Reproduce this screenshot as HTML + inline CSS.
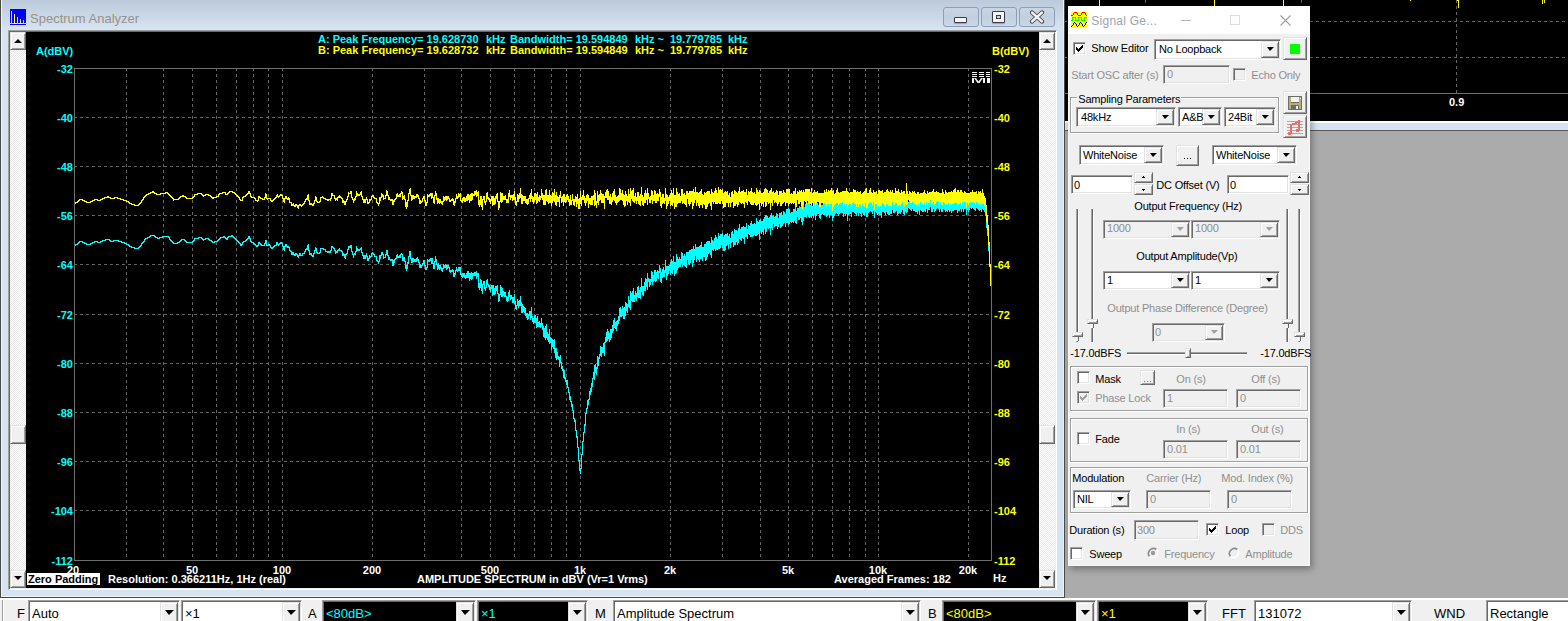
<!DOCTYPE html><html><head><meta charset="utf-8"><style>
*{margin:0;padding:0;box-sizing:border-box}
html,body{width:1568px;height:621px;overflow:hidden;background:#ababab;font-family:"Liberation Sans",sans-serif}
.a{position:absolute}
.t{position:absolute;white-space:pre;line-height:1}
.cb{position:absolute;font-weight:bold;font-size:11px;white-space:pre;line-height:1}
.win7btn{position:absolute;border:1px solid #8796b3;border-radius:3px;background:linear-gradient(#c7d4e3,#c0cedf 50%,#cfdced)}
.sunk{position:absolute;border-top:1px solid #a0a0a0;border-left:1px solid #a0a0a0;border-right:1px solid #fff;border-bottom:1px solid #fff}
.sunk2{position:absolute;border-top:1px solid #696969;border-left:1px solid #696969;border-right:1px solid #e3e3e3;border-bottom:1px solid #e3e3e3}
.rais{position:absolute;background:#f0f0f0;border-top:1px solid #fff;border-left:1px solid #fff;border-right:1px solid #696969;border-bottom:1px solid #696969}
.rais2{position:absolute;border-top:1px solid #e3e3e3;border-left:1px solid #e3e3e3;border-right:1px solid #a0a0a0;border-bottom:1px solid #a0a0a0}
.arr{position:absolute;width:0;height:0;border-left:4px solid transparent;border-right:4px solid transparent;border-top:4px solid #000}
.ui{font-size:11px;color:#000}
.dis{color:#a0a0a0}
</style></head><body><div class="a" style="left:1064px;top:0px;width:504px;height:121px;background:#000"></div><div class="a" style="left:1064px;top:121px;width:504px;height:2px;background:#fff"></div><div class="a" style="left:1064px;top:123px;width:504px;height:7px;background:#d6e3f1"></div><div class="a" style="left:1064px;top:130px;width:504px;height:1px;background:#595959"></div><svg class="a" style="left:0;top:0" width="1568" height="130" viewBox="0 0 1568 130" shape-rendering="crispEdges"><path d="M1145.5 0V93M1301.5 0V93M1456.5 0V93M1064 21.5H1568M1064 57.5H1568" stroke="#646464" stroke-dasharray="3 3" fill="none"/><path d="M1064 93.5H1568" stroke="#6e6e6e" fill="none"/><path d="M1099 0h1v6h-1zM1214 0h1v6h-1zM1283 0h1v6h-1zM1410 0h1v1h-1zM1457 0h2v1h-2zM1458 0h1v8h-1zM1542 0h1v4h-1zM1544 0h1v3h-1z" fill="#ffff00"/></svg><div class="t" style="left:1449px;top:97px;font-size:11px;font-weight:bold;color:#fff">0.9</div><div class="a" style="left:0;top:-8px;width:1065px;height:606px;background:#d6e3f1;border:1px solid #4a4a4a;border-top:none"></div><div class="a" style="left:1px;top:-8px;width:1063px;height:605px;border-left:1px solid #eef4fa;border-right:1px solid #eef4fa;border-bottom:1px solid #eef4fa"></div><div class="a" style="left:2px;top:0;width:1061px;height:29px;background:linear-gradient(#bccadb,#c9d6e5 50%,#d6e3f1)"></div><svg class="a" style="left:10px;top:9px" width="16" height="16" viewBox="0 0 16 16"><rect width="16" height="16" fill="#0000ff"/><path d="M1.5 14V2 M4.5 14V4.5 M7.5 14V7.5 M10.5 14V9.5 M13.5 14V11 M0 14.5H16" stroke="#ffff00" stroke-width="1" fill="none" shape-rendering="crispEdges"/></svg><div class="t" style="left:30px;top:12px;font-size:13px;color:#97928c">Spectrum Analyzer</div><div class="a" style="left:943px;top:7px;width:36px;height:20px;border:1px solid #8e9db8;border-radius:3px;background:linear-gradient(#c9d5e3,#c2cfdf 50%,#cbd8e8)"></div><div class="a" style="left:981px;top:7px;width:36px;height:20px;border:1px solid #8e9db8;border-radius:3px;background:linear-gradient(#c9d5e3,#c2cfdf 50%,#cbd8e8)"></div><div class="a" style="left:1019px;top:7px;width:36px;height:20px;border:1px solid #8e9db8;border-radius:3px;background:linear-gradient(#c9d5e3,#c2cfdf 50%,#cbd8e8)"></div><div class="a" style="left:954px;top:17px;width:13px;height:6px;background:#f4f4f4;border:1px solid #3c3c46;border-radius:1px;box-shadow:0 1px 1px rgba(0,0,0,.25)"></div><div class="a" style="left:992px;top:11px;width:13px;height:12px;background:#f4f4f4;border:1px solid #3c3c46;border-radius:1px;box-shadow:0 1px 1px rgba(0,0,0,.25)"></div><div class="a" style="left:996px;top:15px;width:5px;height:4px;background:#c7d4e3;border:1px solid #3c3c46"></div><svg class="a" style="left:1029px;top:10px" width="16" height="14" viewBox="0 0 16 14"><path d="M3 2.5L13 11.5M13 2.5L3 11.5" stroke="#3c3c46" stroke-width="4.2" stroke-linecap="round"/><path d="M3 2.5L13 11.5M13 2.5L3 11.5" stroke="#f2f2f2" stroke-width="2.4" stroke-linecap="round"/></svg><div class="a" style="left:8px;top:30px;width:1049px;height:560px;border-top:1px solid #a0a0a0;border-left:1px solid #a0a0a0;border-right:1px solid #fff;border-bottom:1px solid #fff;box-shadow:inset 1px 1px 0 #696969,inset -1px -1px 0 #eef0f2"></div><div class="a" style="left:10px;top:32px;width:1045px;height:556px;background:#000"></div><div class="a" style="left:10px;top:32px;width:16px;height:556px;background-color:#f7f7f7;background-image:repeating-conic-gradient(#fff 0 25%,#e8e8e8 0 50%);background-size:2px 2px"></div><div class="a" style="left:10px;top:32px;width:16px;height:18px;background:#f0f0f0;border-top:1px solid #e3e3e3;border-left:1px solid #e3e3e3;border-right:1px solid #696969;border-bottom:1px solid #696969;box-shadow:inset 1px 1px 0 #fff,inset -1px -1px 0 #a0a0a0"></div><div class="a" style="left:14px;top:39px;width:0;height:0;border-left:4px solid transparent;border-right:4px solid transparent;border-bottom:4px solid #000"></div><div class="a" style="left:10px;top:570px;width:16px;height:18px;background:#f0f0f0;border-top:1px solid #e3e3e3;border-left:1px solid #e3e3e3;border-right:1px solid #696969;border-bottom:1px solid #696969;box-shadow:inset 1px 1px 0 #fff,inset -1px -1px 0 #a0a0a0"></div><div class="a" style="left:14px;top:576px;width:0;height:0;border-left:4px solid transparent;border-right:4px solid transparent;border-top:4px solid #000"></div><div class="a" style="left:10px;top:425px;width:16px;height:19px;background:#f0f0f0;border-top:1px solid #e3e3e3;border-left:1px solid #e3e3e3;border-right:1px solid #696969;border-bottom:1px solid #696969;box-shadow:inset 1px 1px 0 #fff,inset -1px -1px 0 #a0a0a0"></div><div class="a" style="left:1039px;top:32px;width:16px;height:556px;background-color:#f7f7f7;background-image:repeating-conic-gradient(#fff 0 25%,#e8e8e8 0 50%);background-size:2px 2px"></div><div class="a" style="left:1039px;top:32px;width:16px;height:18px;background:#f0f0f0;border-top:1px solid #e3e3e3;border-left:1px solid #e3e3e3;border-right:1px solid #696969;border-bottom:1px solid #696969;box-shadow:inset 1px 1px 0 #fff,inset -1px -1px 0 #a0a0a0"></div><div class="a" style="left:1043px;top:39px;width:0;height:0;border-left:4px solid transparent;border-right:4px solid transparent;border-bottom:4px solid #000"></div><div class="a" style="left:1039px;top:570px;width:16px;height:18px;background:#f0f0f0;border-top:1px solid #e3e3e3;border-left:1px solid #e3e3e3;border-right:1px solid #696969;border-bottom:1px solid #696969;box-shadow:inset 1px 1px 0 #fff,inset -1px -1px 0 #a0a0a0"></div><div class="a" style="left:1043px;top:576px;width:0;height:0;border-left:4px solid transparent;border-right:4px solid transparent;border-top:4px solid #000"></div><div class="a" style="left:1039px;top:425px;width:16px;height:19px;background:#f0f0f0;border-top:1px solid #e3e3e3;border-left:1px solid #e3e3e3;border-right:1px solid #696969;border-bottom:1px solid #696969;box-shadow:inset 1px 1px 0 #fff,inset -1px -1px 0 #a0a0a0"></div><svg class="a" style="left:0;top:0" width="1568" height="621" viewBox="0 0 1568 621" shape-rendering="crispEdges"><path d="M126.5 68V560M163.5 68V560M192.5 68V560M216.5 68V560M236.5 68V560M253.5 68V560M268.5 68V560M282.5 68V560M372.5 68V560M424.5 68V560M461.5 68V560M490.5 68V560M514.5 68V560M534.5 68V560M551.5 68V560M566.5 68V560M580.5 68V560M670.5 68V560M722.5 68V560M760.5 68V560M788.5 68V560M812.5 68V560M832.5 68V560M849.5 68V560M865.5 68V560M878.5 68V560M968.5 68V560M74 117.5H991M74 166.5H991M74 215.5H991M74 264.5H991M74 314.5H991M74 363.5H991M74 412.5H991M74 461.5H991M74 510.5H991" stroke="#646464" stroke-width="1" stroke-dasharray="3 3" fill="none"/><rect x="74.5" y="68.5" width="917" height="492" stroke="#6e6e6e" fill="none"/><path d="M75 244h1v2h-1zM76 244h1v1h-1zM77 243h1v2h-1zM78 242h1v2h-1zM79 241h1v2h-1zM80 241h1v1h-1zM81 241h1v1h-1zM82 241h1v2h-1zM83 242h1v1h-1zM84 242h1v2h-1zM85 243h1v1h-1zM86 243h1v2h-1zM87 244h1v1h-1zM88 244h1v1h-1zM89 244h1v1h-1zM90 243h1v2h-1zM91 243h1v1h-1zM92 242h1v2h-1zM93 242h1v1h-1zM94 241h1v2h-1zM95 241h1v1h-1zM96 241h1v1h-1zM97 241h1v2h-1zM98 242h1v1h-1zM99 242h1v1h-1zM100 241h1v2h-1zM101 241h1v1h-1zM102 240h1v2h-1zM103 240h1v1h-1zM104 240h1v1h-1zM105 239h1v2h-1zM106 239h1v1h-1zM107 239h1v1h-1zM108 239h1v1h-1zM109 239h1v2h-1zM110 240h1v2h-1zM111 241h1v1h-1zM112 241h1v1h-1zM113 240h1v2h-1zM114 240h1v1h-1zM115 240h1v1h-1zM116 240h1v1h-1zM117 240h1v1h-1zM118 240h1v2h-1zM119 241h1v1h-1zM120 241h1v1h-1zM121 241h1v2h-1zM122 242h1v1h-1zM123 242h1v1h-1zM124 242h1v2h-1zM125 243h1v1h-1zM126 243h1v2h-1zM127 244h1v1h-1zM128 244h1v2h-1zM129 245h1v2h-1zM130 246h1v1h-1zM131 246h1v2h-1zM132 247h1v1h-1zM133 247h1v1h-1zM134 247h1v2h-1zM135 248h1v1h-1zM136 248h1v1h-1zM137 248h1v1h-1zM138 247h1v2h-1zM139 246h1v2h-1zM140 245h1v2h-1zM141 243h1v3h-1zM142 242h1v2h-1zM143 241h1v2h-1zM144 239h1v3h-1zM145 238h1v2h-1zM146 238h1v1h-1zM147 237h1v2h-1zM148 237h1v1h-1zM149 236h1v2h-1zM150 235h1v2h-1zM151 235h1v1h-1zM152 235h1v1h-1zM153 235h1v1h-1zM154 235h1v2h-1zM155 236h1v2h-1zM156 237h1v1h-1zM157 237h1v2h-1zM158 238h1v1h-1zM159 237h1v2h-1zM160 237h1v1h-1zM161 237h1v1h-1zM162 236h1v2h-1zM163 236h1v1h-1zM164 236h1v1h-1zM165 236h1v1h-1zM166 236h1v1h-1zM167 236h1v1h-1zM168 236h1v2h-1zM169 237h1v3h-1zM170 239h1v2h-1zM171 240h1v2h-1zM172 241h1v2h-1zM173 242h1v2h-1zM174 243h1v1h-1zM175 243h1v1h-1zM176 243h1v1h-1zM177 242h1v2h-1zM178 242h1v1h-1zM179 241h1v2h-1zM180 240h1v2h-1zM181 239h1v2h-1zM182 239h1v1h-1zM183 239h1v1h-1zM184 239h1v2h-1zM185 240h1v2h-1zM186 241h1v2h-1zM187 242h1v1h-1zM188 242h1v1h-1zM189 242h1v1h-1zM190 242h1v1h-1zM191 242h1v1h-1zM192 241h1v2h-1zM193 240h1v2h-1zM194 238h1v3h-1zM195 238h1v1h-1zM196 238h1v1h-1zM197 238h1v1h-1zM198 237h1v2h-1zM199 237h1v1h-1zM200 237h1v1h-1zM201 237h1v2h-1zM202 238h1v2h-1zM203 239h1v2h-1zM204 239h1v1h-1zM205 238h1v2h-1zM206 238h1v1h-1zM207 238h1v1h-1zM208 238h1v2h-1zM209 239h1v2h-1zM210 240h1v1h-1zM211 240h1v2h-1zM212 241h1v2h-1zM213 242h1v1h-1zM214 241h1v2h-1zM215 241h1v1h-1zM216 241h1v1h-1zM217 240h1v2h-1zM218 239h1v2h-1zM219 238h1v2h-1zM220 237h1v2h-1zM221 237h1v1h-1zM222 237h1v1h-1zM223 236h1v2h-1zM224 236h1v2h-1zM225 237h1v2h-1zM226 238h1v2h-1zM227 237h1v3h-1zM228 236h1v2h-1zM229 236h1v1h-1zM230 236h1v1h-1zM231 235h1v2h-1zM232 235h1v2h-1zM233 236h1v2h-1zM234 237h1v2h-1zM235 238h1v2h-1zM236 239h1v2h-1zM237 240h1v2h-1zM238 241h1v2h-1zM239 242h1v2h-1zM240 243h1v3h-1zM241 244h1v2h-1zM242 242h1v3h-1zM243 241h1v2h-1zM244 241h1v1h-1zM245 240h1v2h-1zM246 239h1v2h-1zM247 238h1v2h-1zM248 236h1v3h-1zM249 236h1v3h-1zM250 238h1v4h-1zM251 241h1v2h-1zM252 242h1v1h-1zM253 242h1v2h-1zM254 243h1v2h-1zM255 244h1v2h-1zM256 245h1v2h-1zM257 245h1v2h-1zM258 242h1v4h-1zM259 242h1v2h-1zM260 243h1v2h-1zM261 244h1v2h-1zM262 245h1v1h-1zM263 245h1v1h-1zM264 243h1v3h-1zM265 240h1v4h-1zM266 240h1v6h-1zM267 245h1v1h-1zM268 244h1v2h-1zM269 244h1v2h-1zM270 245h1v3h-1zM271 247h1v2h-1zM272 247h1v2h-1zM273 246h1v2h-1zM274 245h1v2h-1zM275 245h1v1h-1zM276 242h1v4h-1zM277 242h1v3h-1zM278 244h1v2h-1zM279 243h1v2h-1zM280 242h1v2h-1zM281 242h1v2h-1zM282 243h1v4h-1zM283 246h1v4h-1zM284 246h1v5h-1zM285 244h1v3h-1zM286 244h1v3h-1zM287 246h1v2h-1zM288 246h1v2h-1zM289 247h1v4h-1zM290 250h1v2h-1zM291 251h1v4h-1zM292 252h1v3h-1zM293 252h1v3h-1zM294 254h1v2h-1zM295 253h1v3h-1zM296 253h1v2h-1zM297 254h1v3h-1zM298 255h1v3h-1zM299 253h1v3h-1zM300 253h1v3h-1zM301 255h1v1h-1zM302 253h1v3h-1zM303 253h1v1h-1zM304 251h1v3h-1zM305 249h1v3h-1zM306 248h1v2h-1zM307 245h1v5h-1zM308 244h1v7h-1zM309 250h1v5h-1zM310 253h1v2h-1zM311 253h1v3h-1zM312 255h1v2h-1zM313 253h1v4h-1zM314 250h1v4h-1zM315 247h1v4h-1zM316 248h1v5h-1zM317 252h1v2h-1zM318 253h1v1h-1zM319 252h1v2h-1zM320 248h1v5h-1zM321 248h1v1h-1zM322 248h1v1h-1zM323 248h1v2h-1zM324 249h1v1h-1zM325 249h1v3h-1zM326 251h1v1h-1zM327 251h1v2h-1zM328 251h1v2h-1zM329 251h1v2h-1zM330 250h1v3h-1zM331 246h1v5h-1zM332 246h1v2h-1zM333 247h1v2h-1zM334 248h1v3h-1zM335 250h1v4h-1zM336 251h1v2h-1zM337 250h1v3h-1zM338 249h1v2h-1zM339 248h1v3h-1zM340 250h1v1h-1zM341 250h1v2h-1zM342 251h1v5h-1zM343 253h1v3h-1zM344 254h1v4h-1zM345 254h1v5h-1zM346 253h1v2h-1zM347 249h1v5h-1zM348 246h1v4h-1zM349 246h1v2h-1zM350 245h1v3h-1zM351 245h1v7h-1zM352 251h1v4h-1zM353 254h1v4h-1zM354 253h1v2h-1zM355 251h1v4h-1zM356 246h1v6h-1zM357 248h1v3h-1zM358 249h1v2h-1zM359 249h1v2h-1zM360 248h1v2h-1zM361 247h1v6h-1zM362 252h1v4h-1zM363 255h1v4h-1zM364 255h1v4h-1zM365 255h1v4h-1zM366 253h1v4h-1zM367 256h1v5h-1zM368 258h1v3h-1zM369 255h1v4h-1zM370 256h1v2h-1zM371 253h1v4h-1zM372 252h1v2h-1zM373 253h1v2h-1zM374 254h1v3h-1zM375 256h1v1h-1zM376 256h1v5h-1zM377 260h1v2h-1zM378 261h1v3h-1zM379 255h1v7h-1zM380 255h1v4h-1zM381 252h1v4h-1zM382 252h1v3h-1zM383 254h1v5h-1zM384 257h1v1h-1zM385 254h1v4h-1zM386 250h1v5h-1zM387 250h1v6h-1zM388 255h1v5h-1zM389 257h1v3h-1zM390 259h1v2h-1zM391 259h1v2h-1zM392 259h1v7h-1zM393 260h1v6h-1zM394 259h1v4h-1zM395 258h1v2h-1zM396 255h1v4h-1zM397 254h1v4h-1zM398 256h1v2h-1zM399 255h1v3h-1zM400 254h1v4h-1zM401 253h1v2h-1zM402 254h1v7h-1zM403 257h1v4h-1zM404 257h1v5h-1zM405 261h1v8h-1zM406 265h1v6h-1zM407 262h1v7h-1zM408 256h1v8h-1zM409 251h1v6h-1zM410 251h1v8h-1zM411 258h1v5h-1zM412 258h1v5h-1zM413 258h1v4h-1zM414 259h1v3h-1zM415 259h1v3h-1zM416 258h1v4h-1zM417 257h1v4h-1zM418 259h1v4h-1zM419 262h1v6h-1zM420 264h1v4h-1zM421 265h1v3h-1zM422 263h1v3h-1zM423 260h1v4h-1zM424 260h1v6h-1zM425 265h1v5h-1zM426 267h1v3h-1zM427 259h1v9h-1zM428 260h1v2h-1zM429 259h1v3h-1zM430 258h1v3h-1zM431 258h1v6h-1zM432 258h1v6h-1zM433 263h1v6h-1zM434 261h1v8h-1zM435 256h1v6h-1zM436 259h1v6h-1zM437 264h1v6h-1zM438 263h1v6h-1zM439 265h1v5h-1zM440 265h1v4h-1zM441 267h1v4h-1zM442 268h1v4h-1zM443 264h1v5h-1zM444 265h1v3h-1zM445 264h1v4h-1zM446 265h1v5h-1zM447 265h1v4h-1zM448 265h1v3h-1zM449 267h1v5h-1zM450 270h1v3h-1zM451 270h1v2h-1zM452 269h1v3h-1zM453 270h1v7h-1zM454 273h1v4h-1zM455 270h1v5h-1zM456 267h1v4h-1zM457 269h1v3h-1zM458 267h1v4h-1zM459 267h1v4h-1zM460 267h1v8h-1zM461 274h1v3h-1zM462 273h1v5h-1zM463 273h1v4h-1zM464 273h1v5h-1zM465 275h1v4h-1zM466 273h1v5h-1zM467 271h1v7h-1zM468 271h1v7h-1zM469 273h1v8h-1zM470 273h1v6h-1zM471 272h1v8h-1zM472 273h1v6h-1zM473 273h1v3h-1zM474 272h1v4h-1zM475 272h1v4h-1zM476 271h1v8h-1zM477 273h1v4h-1zM478 273h1v15h-1zM479 283h1v7h-1zM480 279h1v9h-1zM481 280h1v11h-1zM482 284h1v10h-1zM483 281h1v4h-1zM484 281h1v8h-1zM485 287h1v4h-1zM486 280h1v8h-1zM487 279h1v6h-1zM488 284h1v3h-1zM489 285h1v5h-1zM490 287h1v5h-1zM491 285h1v4h-1zM492 285h1v11h-1zM493 285h1v10h-1zM494 288h1v7h-1zM495 286h1v8h-1zM496 286h1v5h-1zM497 285h1v9h-1zM498 293h1v9h-1zM499 294h1v7h-1zM500 285h1v10h-1zM501 287h1v10h-1zM502 288h1v9h-1zM503 291h1v5h-1zM504 292h1v5h-1zM505 292h1v5h-1zM506 296h1v5h-1zM507 297h1v5h-1zM508 292h1v9h-1zM509 290h1v7h-1zM510 295h1v5h-1zM511 295h1v4h-1zM512 297h1v6h-1zM513 297h1v6h-1zM514 294h1v10h-1zM515 301h1v8h-1zM516 305h1v5h-1zM517 299h1v7h-1zM518 301h1v7h-1zM519 300h1v6h-1zM520 296h1v10h-1zM521 302h1v11h-1zM522 304h1v9h-1zM523 306h1v6h-1zM524 307h1v6h-1zM525 308h1v8h-1zM526 313h1v5h-1zM527 313h1v7h-1zM528 314h1v5h-1zM529 311h1v5h-1zM530 311h1v9h-1zM531 307h1v11h-1zM532 316h1v6h-1zM533 318h1v6h-1zM534 315h1v8h-1zM535 315h1v8h-1zM536 318h1v10h-1zM537 316h1v11h-1zM538 322h1v5h-1zM539 321h1v6h-1zM540 323h1v5h-1zM541 318h1v9h-1zM542 323h1v7h-1zM543 326h1v11h-1zM544 328h1v10h-1zM545 326h1v14h-1zM546 324h1v14h-1zM547 332h1v8h-1zM548 334h1v8h-1zM549 329h1v15h-1zM550 337h1v6h-1zM551 338h1v12h-1zM552 339h1v8h-1zM553 340h1v9h-1zM554 339h1v14h-1zM555 348h1v10h-1zM556 348h1v12h-1zM557 352h1v7h-1zM558 356h1v4h-1zM559 357h1v10h-1zM560 355h1v8h-1zM561 362h1v7h-1zM562 366h1v5h-1zM563 369h1v9h-1zM564 370h1v9h-1zM565 377h1v5h-1zM566 380h1v5h-1zM567 380h1v8h-1zM568 387h1v6h-1zM569 392h1v8h-1zM570 396h1v6h-1zM571 401h1v6h-1zM572 404h1v7h-1zM573 410h1v9h-1zM574 418h1v4h-1zM575 420h1v11h-1zM576 430h1v8h-1zM577 436h1v12h-1zM578 447h1v14h-1zM579 460h1v11h-1zM580 468h1v6h-1zM581 454h1v15h-1zM582 441h1v14h-1zM583 432h1v10h-1zM584 424h1v9h-1zM585 413h1v13h-1zM586 408h1v6h-1zM587 400h1v9h-1zM588 399h1v6h-1zM589 391h1v9h-1zM590 388h1v7h-1zM591 383h1v9h-1zM592 378h1v9h-1zM593 372h1v7h-1zM594 365h1v15h-1zM595 364h1v9h-1zM596 367h1v8h-1zM597 356h1v13h-1zM598 357h1v9h-1zM599 354h1v5h-1zM600 346h1v10h-1zM601 347h1v10h-1zM602 347h1v6h-1zM603 343h1v10h-1zM604 342h1v14h-1zM605 337h1v6h-1zM606 332h1v10h-1zM607 329h1v12h-1zM608 331h1v8h-1zM609 333h1v9h-1zM610 329h1v11h-1zM611 329h1v9h-1zM612 325h1v8h-1zM613 320h1v11h-1zM614 318h1v10h-1zM615 322h1v7h-1zM616 321h1v10h-1zM617 320h1v6h-1zM618 316h1v8h-1zM619 308h1v13h-1zM620 307h1v10h-1zM621 309h1v8h-1zM622 306h1v10h-1zM623 308h1v11h-1zM624 307h1v12h-1zM625 302h1v14h-1zM626 303h1v8h-1zM627 304h1v9h-1zM628 296h1v11h-1zM629 300h1v8h-1zM630 291h1v19h-1zM631 293h1v8h-1zM632 291h1v11h-1zM633 288h1v14h-1zM634 295h1v7h-1zM635 291h1v8h-1zM636 293h1v8h-1zM637 287h1v10h-1zM638 286h1v12h-1zM639 290h1v8h-1zM640 287h1v12h-1zM641 278h1v14h-1zM642 286h1v9h-1zM643 286h1v10h-1zM644 282h1v9h-1zM645 278h1v13h-1zM646 279h1v8h-1zM647 273h1v17h-1zM648 278h1v4h-1zM649 279h1v8h-1zM650 279h1v6h-1zM651 271h1v11h-1zM652 272h1v13h-1zM653 275h1v7h-1zM654 270h1v11h-1zM655 270h1v12h-1zM656 272h1v9h-1zM657 270h1v8h-1zM658 271h1v8h-1zM659 265h1v8h-1zM660 268h1v14h-1zM661 272h1v11h-1zM662 269h1v9h-1zM663 267h1v10h-1zM664 270h1v7h-1zM665 260h1v13h-1zM666 266h1v14h-1zM667 266h1v10h-1zM668 266h1v8h-1zM669 265h1v6h-1zM670 262h1v13h-1zM671 259h1v14h-1zM672 261h1v13h-1zM673 256h1v14h-1zM674 262h1v14h-1zM675 262h1v12h-1zM676 254h1v19h-1zM677 257h1v13h-1zM678 259h1v9h-1zM679 257h1v10h-1zM680 259h1v8h-1zM681 252h1v12h-1zM682 253h1v14h-1zM683 256h1v9h-1zM684 254h1v12h-1zM685 256h1v11h-1zM686 252h1v16h-1zM687 252h1v8h-1zM688 252h1v12h-1zM689 250h1v15h-1zM690 250h1v13h-1zM691 249h1v11h-1zM692 249h1v18h-1zM693 246h1v17h-1zM694 249h1v11h-1zM695 244h1v12h-1zM696 247h1v15h-1zM697 247h1v12h-1zM698 247h1v13h-1zM699 246h1v16h-1zM700 245h1v14h-1zM701 242h1v17h-1zM702 247h1v14h-1zM703 247h1v10h-1zM704 244h1v13h-1zM705 244h1v17h-1zM706 242h1v18h-1zM707 241h1v16h-1zM708 241h1v13h-1zM709 241h1v12h-1zM710 243h1v12h-1zM711 237h1v21h-1zM712 240h1v10h-1zM713 241h1v10h-1zM714 238h1v11h-1zM715 235h1v16h-1zM716 237h1v13h-1zM717 239h1v11h-1zM718 233h1v16h-1zM719 236h1v13h-1zM720 234h1v14h-1zM721 234h1v11h-1zM722 233h1v15h-1zM723 237h1v14h-1zM724 235h1v16h-1zM725 234h1v16h-1zM726 234h1v12h-1zM727 233h1v12h-1zM728 236h1v13h-1zM729 234h1v10h-1zM730 238h1v10h-1zM731 232h1v11h-1zM732 231h1v11h-1zM733 234h1v13h-1zM734 229h1v16h-1zM735 230h1v15h-1zM736 230h1v12h-1zM737 231h1v14h-1zM738 228h1v15h-1zM739 224h1v15h-1zM740 229h1v11h-1zM741 227h1v14h-1zM742 227h1v11h-1zM743 226h1v13h-1zM744 227h1v17h-1zM745 227h1v10h-1zM746 223h1v14h-1zM747 229h1v10h-1zM748 225h1v9h-1zM749 226h1v9h-1zM750 223h1v14h-1zM751 221h1v16h-1zM752 224h1v13h-1zM753 224h1v12h-1zM754 223h1v12h-1zM755 224h1v12h-1zM756 218h1v18h-1zM757 221h1v14h-1zM758 222h1v12h-1zM759 220h1v20h-1zM760 219h1v12h-1zM761 221h1v13h-1zM762 221h1v11h-1zM763 219h1v16h-1zM764 217h1v12h-1zM765 215h1v19h-1zM766 215h1v17h-1zM767 216h1v12h-1zM768 218h1v11h-1zM769 217h1v11h-1zM770 215h1v20h-1zM771 213h1v15h-1zM772 216h1v14h-1zM773 215h1v9h-1zM774 217h1v10h-1zM775 216h1v10h-1zM776 213h1v13h-1zM777 214h1v15h-1zM778 218h1v9h-1zM779 213h1v11h-1zM780 213h1v15h-1zM781 212h1v15h-1zM782 215h1v11h-1zM783 211h1v13h-1zM784 212h1v11h-1zM785 214h1v13h-1zM786 209h1v14h-1zM787 209h1v14h-1zM788 208h1v17h-1zM789 209h1v15h-1zM790 213h1v9h-1zM791 212h1v11h-1zM792 212h1v10h-1zM793 209h1v14h-1zM794 209h1v12h-1zM795 205h1v18h-1zM796 211h1v13h-1zM797 208h1v9h-1zM798 208h1v12h-1zM799 206h1v14h-1zM800 207h1v11h-1zM801 206h1v16h-1zM802 207h1v18h-1zM803 205h1v16h-1zM804 207h1v10h-1zM805 204h1v13h-1zM806 204h1v14h-1zM807 203h1v12h-1zM808 202h1v15h-1zM809 203h1v15h-1zM810 205h1v12h-1zM811 201h1v17h-1zM812 206h1v10h-1zM813 204h1v14h-1zM814 202h1v13h-1zM815 204h1v16h-1zM816 204h1v12h-1zM817 203h1v11h-1zM818 205h1v9h-1zM819 204h1v14h-1zM820 204h1v15h-1zM821 205h1v10h-1zM822 205h1v9h-1zM823 204h1v11h-1zM824 202h1v13h-1zM825 203h1v12h-1zM826 200h1v17h-1zM827 203h1v13h-1zM828 201h1v14h-1zM829 202h1v16h-1zM830 201h1v14h-1zM831 199h1v16h-1zM832 202h1v19h-1zM833 201h1v17h-1zM834 205h1v11h-1zM835 204h1v10h-1zM836 201h1v12h-1zM837 199h1v15h-1zM838 202h1v14h-1zM839 203h1v11h-1zM840 202h1v11h-1zM841 202h1v11h-1zM842 201h1v12h-1zM843 201h1v16h-1zM844 201h1v13h-1zM845 201h1v15h-1zM846 198h1v16h-1zM847 201h1v20h-1zM848 202h1v13h-1zM849 203h1v11h-1zM850 202h1v12h-1zM851 202h1v15h-1zM852 202h1v10h-1zM853 199h1v13h-1zM854 200h1v13h-1zM855 200h1v14h-1zM856 201h1v15h-1zM857 200h1v13h-1zM858 201h1v15h-1zM859 201h1v12h-1zM860 200h1v14h-1zM861 203h1v14h-1zM862 202h1v11h-1zM863 201h1v14h-1zM864 200h1v16h-1zM865 198h1v14h-1zM866 197h1v20h-1zM867 201h1v16h-1zM868 201h1v12h-1zM869 199h1v13h-1zM870 197h1v14h-1zM871 201h1v11h-1zM872 201h1v13h-1zM873 199h1v12h-1zM874 200h1v18h-1zM875 200h1v12h-1zM876 200h1v13h-1zM877 202h1v13h-1zM878 199h1v15h-1zM879 199h1v16h-1zM880 200h1v15h-1zM881 199h1v19h-1zM882 198h1v14h-1zM883 201h1v11h-1zM884 201h1v12h-1zM885 200h1v15h-1zM886 198h1v14h-1zM887 197h1v17h-1zM888 200h1v15h-1zM889 200h1v15h-1zM890 198h1v16h-1zM891 200h1v14h-1zM892 198h1v12h-1zM893 201h1v12h-1zM894 201h1v12h-1zM895 196h1v16h-1zM896 199h1v12h-1zM897 199h1v16h-1zM898 197h1v17h-1zM899 200h1v13h-1zM900 201h1v13h-1zM901 198h1v14h-1zM902 200h1v10h-1zM903 199h1v15h-1zM904 199h1v16h-1zM905 202h1v10h-1zM906 191h1v22h-1zM907 199h1v13h-1zM908 202h1v6h-1zM909 199h1v10h-1zM910 200h1v10h-1zM911 201h1v10h-1zM912 198h1v11h-1zM913 200h1v11h-1zM914 199h1v12h-1zM915 200h1v12h-1zM916 201h1v11h-1zM917 200h1v14h-1zM918 200h1v11h-1zM919 201h1v14h-1zM920 200h1v10h-1zM921 201h1v10h-1zM922 200h1v12h-1zM923 200h1v12h-1zM924 197h1v14h-1zM925 201h1v11h-1zM926 202h1v7h-1zM927 198h1v15h-1zM928 200h1v10h-1zM929 200h1v10h-1zM930 199h1v8h-1zM931 200h1v12h-1zM932 198h1v14h-1zM933 196h1v13h-1zM934 200h1v12h-1zM935 199h1v12h-1zM936 198h1v11h-1zM937 199h1v9h-1zM938 199h1v10h-1zM939 200h1v12h-1zM940 200h1v9h-1zM941 200h1v12h-1zM942 196h1v16h-1zM943 199h1v10h-1zM944 201h1v9h-1zM945 197h1v15h-1zM946 199h1v12h-1zM947 200h1v12h-1zM948 199h1v11h-1zM949 198h1v14h-1zM950 199h1v12h-1zM951 197h1v16h-1zM952 199h1v12h-1zM953 196h1v15h-1zM954 196h1v14h-1zM955 195h1v15h-1zM956 198h1v12h-1zM957 196h1v17h-1zM958 197h1v14h-1zM959 198h1v13h-1zM960 196h1v13h-1zM961 197h1v15h-1zM962 199h1v10h-1zM963 199h1v13h-1zM964 198h1v11h-1zM965 199h1v10h-1zM966 199h1v16h-1zM967 199h1v11h-1zM968 199h1v13h-1zM969 199h1v11h-1zM970 198h1v10h-1zM971 199h1v10h-1zM972 197h1v11h-1zM973 199h1v10h-1zM974 198h1v12h-1zM975 198h1v13h-1zM976 197h1v11h-1zM977 200h1v9h-1zM978 197h1v13h-1zM979 198h1v13h-1zM980 197h1v13h-1zM981 199h1v13h-1zM982 195h1v14h-1zM983 199h1v11h-1zM984 202h1v10h-1zM985 204h1v12h-1zM986 211h1v17h-1zM987 221h1v15h-1zM988 231h1v20h-1zM989 248h1v19h-1zM990 266h1v1h-1z" fill="#00ffff"/><path d="M75 202h1v2h-1zM76 202h1v1h-1zM77 201h1v2h-1zM78 200h1v2h-1zM79 199h1v2h-1zM80 199h1v1h-1zM81 199h1v1h-1zM82 199h1v2h-1zM83 200h1v1h-1zM84 200h1v2h-1zM85 201h1v1h-1zM86 201h1v2h-1zM87 202h1v1h-1zM88 202h1v1h-1zM89 202h1v1h-1zM90 201h1v2h-1zM91 201h1v1h-1zM92 200h1v2h-1zM93 200h1v1h-1zM94 199h1v2h-1zM95 199h1v1h-1zM96 199h1v1h-1zM97 199h1v2h-1zM98 200h1v1h-1zM99 200h1v1h-1zM100 199h1v2h-1zM101 199h1v1h-1zM102 198h1v2h-1zM103 198h1v1h-1zM104 197h1v2h-1zM105 197h1v1h-1zM106 197h1v1h-1zM107 196h1v2h-1zM108 196h1v2h-1zM109 197h1v1h-1zM110 197h1v2h-1zM111 198h1v1h-1zM112 198h1v1h-1zM113 198h1v1h-1zM114 197h1v2h-1zM115 197h1v1h-1zM116 197h1v1h-1zM117 197h1v2h-1zM118 198h1v1h-1zM119 198h1v1h-1zM120 198h1v2h-1zM121 199h1v1h-1zM122 199h1v1h-1zM123 199h1v2h-1zM124 200h1v1h-1zM125 200h1v1h-1zM126 200h1v2h-1zM127 201h1v1h-1zM128 201h1v2h-1zM129 202h1v2h-1zM130 203h1v1h-1zM131 203h1v2h-1zM132 204h1v1h-1zM133 204h1v1h-1zM134 204h1v2h-1zM135 205h1v1h-1zM136 205h1v1h-1zM137 205h1v1h-1zM138 204h1v2h-1zM139 203h1v2h-1zM140 202h1v2h-1zM141 200h1v3h-1zM142 199h1v2h-1zM143 197h1v3h-1zM144 196h1v2h-1zM145 195h1v2h-1zM146 194h1v2h-1zM147 194h1v1h-1zM148 193h1v2h-1zM149 193h1v1h-1zM150 192h1v2h-1zM151 192h1v1h-1zM152 191h1v2h-1zM153 191h1v2h-1zM154 192h1v2h-1zM155 193h1v1h-1zM156 193h1v2h-1zM157 194h1v1h-1zM158 194h1v1h-1zM159 194h1v1h-1zM160 193h1v2h-1zM161 193h1v1h-1zM162 193h1v1h-1zM163 193h1v1h-1zM164 193h1v1h-1zM165 192h1v2h-1zM166 192h1v1h-1zM167 192h1v2h-1zM168 193h1v2h-1zM169 194h1v2h-1zM170 195h1v2h-1zM171 196h1v2h-1zM172 197h1v2h-1zM173 198h1v3h-1zM174 199h1v1h-1zM175 199h1v1h-1zM176 199h1v1h-1zM177 199h1v1h-1zM178 198h1v2h-1zM179 197h1v2h-1zM180 196h1v2h-1zM181 196h1v1h-1zM182 195h1v2h-1zM183 195h1v2h-1zM184 196h1v1h-1zM185 196h1v2h-1zM186 197h1v2h-1zM187 198h1v1h-1zM188 198h1v1h-1zM189 198h1v1h-1zM190 198h1v1h-1zM191 198h1v1h-1zM192 197h1v2h-1zM193 196h1v2h-1zM194 194h1v3h-1zM195 194h1v1h-1zM196 194h1v1h-1zM197 193h1v2h-1zM198 193h1v1h-1zM199 193h1v1h-1zM200 193h1v1h-1zM201 193h1v2h-1zM202 194h1v2h-1zM203 195h1v2h-1zM204 195h1v1h-1zM205 194h1v2h-1zM206 194h1v1h-1zM207 194h1v1h-1zM208 194h1v2h-1zM209 195h1v1h-1zM210 195h1v2h-1zM211 196h1v2h-1zM212 197h1v2h-1zM213 197h1v2h-1zM214 197h1v1h-1zM215 197h1v1h-1zM216 196h1v2h-1zM217 196h1v1h-1zM218 194h1v3h-1zM219 193h1v2h-1zM220 193h1v1h-1zM221 193h1v1h-1zM222 192h1v2h-1zM223 192h1v1h-1zM224 192h1v1h-1zM225 192h1v3h-1zM226 194h1v1h-1zM227 193h1v2h-1zM228 192h1v2h-1zM229 191h1v2h-1zM230 191h1v1h-1zM231 191h1v1h-1zM232 191h1v2h-1zM233 192h1v1h-1zM234 192h1v2h-1zM235 193h1v2h-1zM236 194h1v2h-1zM237 195h1v2h-1zM238 196h1v2h-1zM239 197h1v3h-1zM240 199h1v2h-1zM241 200h1v1h-1zM242 197h1v4h-1zM243 196h1v2h-1zM244 196h1v1h-1zM245 195h1v2h-1zM246 194h1v2h-1zM247 193h1v2h-1zM248 191h1v3h-1zM249 191h1v3h-1zM250 193h1v4h-1zM251 196h1v2h-1zM252 197h1v1h-1zM253 197h1v1h-1zM254 197h1v2h-1zM255 198h1v3h-1zM256 200h1v1h-1zM257 200h1v2h-1zM258 196h1v5h-1zM259 196h1v2h-1zM260 197h1v2h-1zM261 198h1v1h-1zM262 198h1v2h-1zM263 199h1v1h-1zM264 197h1v3h-1zM265 193h1v5h-1zM266 194h1v5h-1zM267 198h1v2h-1zM268 198h1v1h-1zM269 198h1v1h-1zM270 198h1v3h-1zM271 200h1v2h-1zM272 200h1v2h-1zM273 199h1v2h-1zM274 198h1v2h-1zM275 197h1v2h-1zM276 195h1v3h-1zM277 194h1v3h-1zM278 196h1v2h-1zM279 195h1v2h-1zM280 194h1v2h-1zM281 194h1v2h-1zM282 195h1v4h-1zM283 198h1v4h-1zM284 198h1v5h-1zM285 196h1v3h-1zM286 196h1v3h-1zM287 198h1v2h-1zM288 197h1v3h-1zM289 198h1v5h-1zM290 202h1v1h-1zM291 202h1v4h-1zM292 204h1v2h-1zM293 203h1v3h-1zM294 205h1v2h-1zM295 204h1v3h-1zM296 204h1v2h-1zM297 205h1v3h-1zM298 205h1v4h-1zM299 204h1v2h-1zM300 204h1v2h-1zM301 205h1v2h-1zM302 204h1v2h-1zM303 203h1v2h-1zM304 201h1v3h-1zM305 199h1v3h-1zM306 198h1v2h-1zM307 195h1v5h-1zM308 194h1v7h-1zM309 200h1v5h-1zM310 203h1v2h-1zM311 203h1v2h-1zM312 204h1v2h-1zM313 203h1v3h-1zM314 200h1v4h-1zM315 196h1v5h-1zM316 197h1v5h-1zM317 201h1v2h-1zM318 202h1v1h-1zM319 201h1v2h-1zM320 197h1v5h-1zM321 197h1v1h-1zM322 196h1v2h-1zM323 197h1v2h-1zM324 198h1v1h-1zM325 198h1v2h-1zM326 199h1v1h-1zM327 199h1v2h-1zM328 199h1v2h-1zM329 199h1v1h-1zM330 198h1v3h-1zM331 193h1v6h-1zM332 193h1v3h-1zM333 195h1v1h-1zM334 195h1v4h-1zM335 198h1v3h-1zM336 198h1v2h-1zM337 197h1v4h-1zM338 196h1v2h-1zM339 195h1v3h-1zM340 196h1v2h-1zM341 197h1v2h-1zM342 198h1v5h-1zM343 200h1v3h-1zM344 201h1v4h-1zM345 201h1v4h-1zM346 199h1v3h-1zM347 196h1v4h-1zM348 192h1v5h-1zM349 193h1v1h-1zM350 191h1v3h-1zM351 191h1v7h-1zM352 197h1v3h-1zM353 199h1v4h-1zM354 198h1v3h-1zM355 196h1v4h-1zM356 191h1v6h-1zM357 193h1v3h-1zM358 194h1v2h-1zM359 194h1v2h-1zM360 192h1v3h-1zM361 191h1v6h-1zM362 196h1v4h-1zM363 199h1v4h-1zM364 199h1v4h-1zM365 199h1v4h-1zM366 197h1v3h-1zM367 199h1v5h-1zM368 202h1v2h-1zM369 199h1v4h-1zM370 199h1v2h-1zM371 196h1v4h-1zM372 195h1v2h-1zM373 195h1v3h-1zM374 197h1v2h-1zM375 198h1v1h-1zM376 198h1v5h-1zM377 202h1v2h-1zM378 203h1v3h-1zM379 197h1v7h-1zM380 197h1v4h-1zM381 193h1v5h-1zM382 194h1v3h-1zM383 195h1v5h-1zM384 198h1v1h-1zM385 195h1v4h-1zM386 190h1v6h-1zM387 191h1v5h-1zM388 195h1v5h-1zM389 197h1v3h-1zM390 199h1v2h-1zM391 199h1v2h-1zM392 199h1v6h-1zM393 200h1v5h-1zM394 199h1v3h-1zM395 198h1v2h-1zM396 194h1v5h-1zM397 193h1v4h-1zM398 195h1v2h-1zM399 194h1v3h-1zM400 193h1v4h-1zM401 191h1v3h-1zM402 192h1v8h-1zM403 196h1v3h-1zM404 195h1v5h-1zM405 199h1v8h-1zM406 202h1v7h-1zM407 200h1v7h-1zM408 193h1v8h-1zM409 189h1v5h-1zM410 188h1v8h-1zM411 195h1v6h-1zM412 195h1v5h-1zM413 195h1v4h-1zM414 196h1v3h-1zM415 196h1v2h-1zM416 194h1v4h-1zM417 194h1v3h-1zM418 195h1v4h-1zM419 198h1v6h-1zM420 200h1v4h-1zM421 201h1v2h-1zM422 198h1v4h-1zM423 196h1v3h-1zM424 196h1v5h-1zM425 200h1v6h-1zM426 202h1v4h-1zM427 194h1v9h-1zM428 195h1v2h-1zM429 194h1v3h-1zM430 193h1v3h-1zM431 193h1v6h-1zM432 193h1v5h-1zM433 197h1v6h-1zM434 195h1v9h-1zM435 191h1v5h-1zM436 193h1v7h-1zM437 198h1v6h-1zM438 198h1v5h-1zM439 199h1v5h-1zM440 199h1v4h-1zM441 201h1v3h-1zM442 201h1v4h-1zM443 196h1v6h-1zM444 197h1v4h-1zM445 196h1v4h-1zM446 196h1v5h-1zM447 196h1v4h-1zM448 196h1v3h-1zM449 198h1v4h-1zM450 200h1v2h-1zM451 199h1v2h-1zM452 198h1v3h-1zM453 199h1v6h-1zM454 201h1v5h-1zM455 198h1v5h-1zM456 194h1v5h-1zM457 196h1v3h-1zM458 193h1v5h-1zM459 194h1v3h-1zM460 193h1v8h-1zM461 200h1v2h-1zM462 198h1v5h-1zM463 197h1v4h-1zM464 197h1v5h-1zM465 198h1v4h-1zM466 196h1v5h-1zM467 194h1v7h-1zM468 194h1v6h-1zM469 195h1v8h-1zM470 194h1v7h-1zM471 193h1v8h-1zM472 193h1v7h-1zM473 194h1v2h-1zM474 191h1v5h-1zM475 191h1v4h-1zM476 190h1v7h-1zM477 192h1v4h-1zM478 191h1v14h-1zM479 200h1v7h-1zM480 196h1v9h-1zM481 196h1v11h-1zM482 199h1v11h-1zM483 196h1v4h-1zM484 196h1v7h-1zM485 201h1v4h-1zM486 193h1v9h-1zM487 192h1v7h-1zM488 197h1v3h-1zM489 198h1v4h-1zM490 199h1v5h-1zM491 196h1v5h-1zM492 196h1v10h-1zM493 196h1v9h-1zM494 198h1v7h-1zM495 196h1v8h-1zM496 194h1v5h-1zM497 193h1v9h-1zM498 201h1v9h-1zM499 201h1v7h-1zM500 192h1v10h-1zM501 193h1v10h-1zM502 193h1v9h-1zM503 196h1v4h-1zM504 196h1v4h-1zM505 195h1v5h-1zM506 199h1v4h-1zM507 199h1v4h-1zM508 193h1v10h-1zM509 190h1v7h-1zM510 195h1v5h-1zM511 195h1v3h-1zM512 195h1v6h-1zM513 194h1v6h-1zM514 191h1v9h-1zM515 197h1v8h-1zM516 201h1v5h-1zM517 194h1v8h-1zM518 195h1v7h-1zM519 193h1v6h-1zM520 188h1v10h-1zM521 194h1v10h-1zM522 195h1v9h-1zM523 196h1v5h-1zM524 196h1v5h-1zM525 196h1v7h-1zM526 199h1v5h-1zM527 199h1v6h-1zM528 198h1v6h-1zM529 195h1v4h-1zM530 193h1v9h-1zM531 189h1v10h-1zM532 196h1v6h-1zM533 197h1v7h-1zM534 193h1v9h-1zM535 193h1v7h-1zM536 194h1v10h-1zM537 192h1v11h-1zM538 197h1v4h-1zM539 195h1v7h-1zM540 196h1v4h-1zM541 189h1v9h-1zM542 193h1v7h-1zM543 195h1v10h-1zM544 195h1v10h-1zM545 190h1v15h-1zM546 189h1v12h-1zM547 195h1v7h-1zM548 195h1v9h-1zM549 190h1v13h-1zM550 195h1v8h-1zM551 196h1v10h-1zM552 192h1v11h-1zM553 193h1v8h-1zM554 189h1v13h-1zM555 195h1v10h-1zM556 192h1v14h-1zM557 196h1v6h-1zM558 197h1v5h-1zM559 195h1v12h-1zM560 191h1v7h-1zM561 197h1v6h-1zM562 196h1v6h-1zM563 194h1v12h-1zM564 194h1v8h-1zM565 197h1v6h-1zM566 195h1v7h-1zM567 194h1v6h-1zM568 196h1v6h-1zM569 199h1v7h-1zM570 195h1v10h-1zM571 200h1v5h-1zM572 194h1v7h-1zM573 199h1v6h-1zM574 199h1v7h-1zM575 196h1v6h-1zM576 197h1v10h-1zM577 194h1v10h-1zM578 199h1v10h-1zM579 198h1v11h-1zM580 191h1v13h-1zM581 197h1v9h-1zM582 195h1v5h-1zM583 190h1v10h-1zM584 196h1v7h-1zM585 198h1v8h-1zM586 195h1v8h-1zM587 194h1v7h-1zM588 195h1v13h-1zM589 198h1v6h-1zM590 198h1v7h-1zM591 196h1v9h-1zM592 196h1v9h-1zM593 195h1v5h-1zM594 190h1v16h-1zM595 193h1v12h-1zM596 201h1v7h-1zM597 191h1v12h-1zM598 195h1v10h-1zM599 194h1v7h-1zM600 190h1v10h-1zM601 193h1v10h-1zM602 194h1v9h-1zM603 194h1v9h-1zM604 196h1v13h-1zM605 192h1v6h-1zM606 190h1v8h-1zM607 189h1v11h-1zM608 191h1v9h-1zM609 196h1v8h-1zM610 194h1v10h-1zM611 197h1v8h-1zM612 193h1v9h-1zM613 191h1v9h-1zM614 189h1v12h-1zM615 195h1v8h-1zM616 197h1v8h-1zM617 196h1v7h-1zM618 195h1v7h-1zM619 188h1v13h-1zM620 189h1v11h-1zM621 193h1v7h-1zM622 190h1v11h-1zM623 194h1v11h-1zM624 195h1v12h-1zM625 191h1v15h-1zM626 194h1v7h-1zM627 196h1v9h-1zM628 189h1v13h-1zM629 194h1v9h-1zM630 188h1v18h-1zM631 191h1v8h-1zM632 190h1v11h-1zM633 188h1v14h-1zM634 196h1v7h-1zM635 193h1v8h-1zM636 197h1v7h-1zM637 192h1v9h-1zM638 192h1v12h-1zM639 196h1v9h-1zM640 194h1v12h-1zM641 187h1v14h-1zM642 195h1v10h-1zM643 197h1v9h-1zM644 193h1v10h-1zM645 190h1v13h-1zM646 193h1v7h-1zM647 188h1v17h-1zM648 193h1v6h-1zM649 197h1v6h-1zM650 196h1v7h-1zM651 190h1v10h-1zM652 191h1v13h-1zM653 195h1v6h-1zM654 190h1v11h-1zM655 191h1v12h-1zM656 194h1v9h-1zM657 193h1v8h-1zM658 194h1v7h-1zM659 189h1v8h-1zM660 192h1v14h-1zM661 197h1v11h-1zM662 194h1v10h-1zM663 194h1v9h-1zM664 198h1v6h-1zM665 188h1v13h-1zM666 194h1v15h-1zM667 195h1v11h-1zM668 197h1v7h-1zM669 195h1v6h-1zM670 193h1v13h-1zM671 190h1v15h-1zM672 193h1v13h-1zM673 188h1v15h-1zM674 195h1v14h-1zM675 195h1v12h-1zM676 188h1v19h-1zM677 192h1v12h-1zM678 194h1v9h-1zM679 193h1v10h-1zM680 196h1v7h-1zM681 189h1v12h-1zM682 189h1v15h-1zM683 194h1v9h-1zM684 193h1v11h-1zM685 195h1v10h-1zM686 191h1v16h-1zM687 191h1v8h-1zM688 193h1v11h-1zM689 191h1v15h-1zM690 191h1v13h-1zM691 191h1v11h-1zM692 191h1v18h-1zM693 189h1v17h-1zM694 192h1v11h-1zM695 187h1v13h-1zM696 192h1v14h-1zM697 192h1v11h-1zM698 193h1v13h-1zM699 192h1v16h-1zM700 191h1v14h-1zM701 189h1v16h-1zM702 194h1v14h-1zM703 195h1v9h-1zM704 192h1v13h-1zM705 193h1v16h-1zM706 192h1v17h-1zM707 191h1v16h-1zM708 191h1v13h-1zM709 191h1v12h-1zM710 194h1v12h-1zM711 189h1v21h-1zM712 192h1v10h-1zM713 193h1v11h-1zM714 191h1v11h-1zM715 188h1v16h-1zM716 190h1v14h-1zM717 193h1v11h-1zM718 187h1v16h-1zM719 190h1v14h-1zM720 189h1v15h-1zM721 190h1v11h-1zM722 189h1v15h-1zM723 193h1v15h-1zM724 192h1v15h-1zM725 191h1v16h-1zM726 192h1v11h-1zM727 191h1v12h-1zM728 195h1v12h-1zM729 193h1v10h-1zM730 197h1v10h-1zM731 192h1v11h-1zM732 191h1v11h-1zM733 194h1v14h-1zM734 190h1v16h-1zM735 191h1v15h-1zM736 192h1v12h-1zM737 193h1v14h-1zM738 191h1v14h-1zM739 187h1v15h-1zM740 192h1v11h-1zM741 191h1v13h-1zM742 191h1v12h-1zM743 190h1v14h-1zM744 192h1v16h-1zM745 192h1v10h-1zM746 189h1v14h-1zM747 195h1v10h-1zM748 191h1v10h-1zM749 192h1v10h-1zM750 191h1v13h-1zM751 188h1v17h-1zM752 192h1v13h-1zM753 193h1v12h-1zM754 192h1v11h-1zM755 194h1v11h-1zM756 188h1v18h-1zM757 190h1v15h-1zM758 192h1v12h-1zM759 190h1v20h-1zM760 191h1v12h-1zM761 193h1v13h-1zM762 193h1v11h-1zM763 192h1v15h-1zM764 189h1v13h-1zM765 188h1v19h-1zM766 189h1v17h-1zM767 190h1v12h-1zM768 193h1v11h-1zM769 191h1v12h-1zM770 190h1v20h-1zM771 188h1v15h-1zM772 192h1v14h-1zM773 191h1v9h-1zM774 193h1v10h-1zM775 192h1v10h-1zM776 190h1v13h-1zM777 191h1v15h-1zM778 195h1v9h-1zM779 191h1v11h-1zM780 191h1v15h-1zM781 191h1v15h-1zM782 193h1v11h-1zM783 190h1v13h-1zM784 192h1v10h-1zM785 193h1v13h-1zM786 189h1v14h-1zM787 189h1v14h-1zM788 189h1v17h-1zM789 189h1v15h-1zM790 194h1v9h-1zM791 193h1v11h-1zM792 194h1v9h-1zM793 191h1v13h-1zM794 191h1v12h-1zM795 188h1v17h-1zM796 194h1v13h-1zM797 191h1v9h-1zM798 192h1v12h-1zM799 190h1v14h-1zM800 191h1v11h-1zM801 190h1v16h-1zM802 192h1v17h-1zM803 190h1v15h-1zM804 192h1v9h-1zM805 189h1v13h-1zM806 189h1v15h-1zM807 189h1v12h-1zM808 189h1v14h-1zM809 189h1v15h-1zM810 192h1v12h-1zM811 188h1v17h-1zM812 193h1v10h-1zM813 192h1v14h-1zM814 190h1v13h-1zM815 192h1v16h-1zM816 192h1v12h-1zM817 191h1v11h-1zM818 193h1v9h-1zM819 193h1v14h-1zM820 193h1v14h-1zM821 193h1v10h-1zM822 193h1v10h-1zM823 193h1v11h-1zM824 190h1v13h-1zM825 192h1v12h-1zM826 189h1v17h-1zM827 192h1v12h-1zM828 190h1v14h-1zM829 191h1v16h-1zM830 190h1v14h-1zM831 188h1v16h-1zM832 191h1v20h-1zM833 190h1v17h-1zM834 194h1v11h-1zM835 193h1v11h-1zM836 190h1v13h-1zM837 188h1v15h-1zM838 192h1v13h-1zM839 193h1v11h-1zM840 192h1v11h-1zM841 192h1v11h-1zM842 191h1v11h-1zM843 191h1v16h-1zM844 191h1v13h-1zM845 191h1v15h-1zM846 188h1v16h-1zM847 191h1v20h-1zM848 192h1v13h-1zM849 193h1v11h-1zM850 192h1v12h-1zM851 192h1v15h-1zM852 192h1v11h-1zM853 189h1v13h-1zM854 190h1v14h-1zM855 190h1v14h-1zM856 192h1v15h-1zM857 191h1v13h-1zM858 192h1v15h-1zM859 192h1v12h-1zM860 191h1v14h-1zM861 194h1v14h-1zM862 193h1v11h-1zM863 192h1v14h-1zM864 191h1v16h-1zM865 189h1v14h-1zM866 188h1v20h-1zM867 193h1v15h-1zM868 193h1v11h-1zM869 190h1v13h-1zM870 188h1v14h-1zM871 192h1v11h-1zM872 193h1v12h-1zM873 190h1v12h-1zM874 192h1v18h-1zM875 192h1v12h-1zM876 191h1v13h-1zM877 194h1v13h-1zM878 190h1v16h-1zM879 190h1v17h-1zM880 191h1v15h-1zM881 191h1v19h-1zM882 190h1v13h-1zM883 193h1v11h-1zM884 192h1v13h-1zM885 192h1v15h-1zM886 190h1v14h-1zM887 189h1v16h-1zM888 191h1v15h-1zM889 192h1v14h-1zM890 190h1v16h-1zM891 192h1v14h-1zM892 190h1v12h-1zM893 193h1v11h-1zM894 193h1v12h-1zM895 188h1v15h-1zM896 191h1v12h-1zM897 191h1v16h-1zM898 189h1v17h-1zM899 192h1v13h-1zM900 193h1v13h-1zM901 190h1v14h-1zM902 192h1v10h-1zM903 191h1v15h-1zM904 191h1v16h-1zM905 194h1v10h-1zM906 183h1v22h-1zM907 191h1v13h-1zM908 194h1v6h-1zM909 191h1v10h-1zM910 192h1v11h-1zM911 193h1v10h-1zM912 191h1v11h-1zM913 192h1v11h-1zM914 191h1v13h-1zM915 193h1v11h-1zM916 194h1v11h-1zM917 192h1v14h-1zM918 192h1v12h-1zM919 194h1v13h-1zM920 193h1v9h-1zM921 193h1v11h-1zM922 193h1v11h-1zM923 192h1v13h-1zM924 190h1v13h-1zM925 193h1v12h-1zM926 194h1v8h-1zM927 191h1v14h-1zM928 193h1v10h-1zM929 192h1v11h-1zM930 192h1v8h-1zM931 192h1v12h-1zM932 191h1v13h-1zM933 189h1v13h-1zM934 192h1v13h-1zM935 192h1v12h-1zM936 191h1v11h-1zM937 192h1v9h-1zM938 192h1v10h-1zM939 193h1v12h-1zM940 193h1v9h-1zM941 193h1v12h-1zM942 189h1v16h-1zM943 192h1v10h-1zM944 194h1v9h-1zM945 190h1v15h-1zM946 192h1v12h-1zM947 193h1v12h-1zM948 192h1v11h-1zM949 192h1v14h-1zM950 192h1v12h-1zM951 191h1v15h-1zM952 192h1v12h-1zM953 190h1v14h-1zM954 189h1v14h-1zM955 188h1v15h-1zM956 192h1v11h-1zM957 190h1v16h-1zM958 190h1v14h-1zM959 192h1v12h-1zM960 190h1v13h-1zM961 190h1v16h-1zM962 192h1v10h-1zM963 193h1v12h-1zM964 191h1v11h-1zM965 192h1v10h-1zM966 193h1v15h-1zM967 193h1v10h-1zM968 193h1v12h-1zM969 193h1v10h-1zM970 192h1v10h-1zM971 192h1v11h-1zM972 190h1v12h-1zM973 192h1v11h-1zM974 192h1v11h-1zM975 192h1v13h-1zM976 191h1v11h-1zM977 194h1v9h-1zM978 191h1v13h-1zM979 192h1v13h-1zM980 191h1v13h-1zM981 193h1v13h-1zM982 189h1v14h-1zM983 193h1v11h-1zM984 196h1v10h-1zM985 198h1v12h-1zM986 205h1v17h-1zM987 215h1v15h-1zM988 225h1v20h-1zM989 242h1v25h-1zM990 264h1v22h-1z" fill="#ffff00"/><path d="M972 72h5v1h-5zM979 72h5v1h-5zM986 72h4v1h-4zM972 74h5v1h-5zM979 74h5v1h-5zM986 74h4v1h-4zM972 76h5v1h-5zM979 76h5v1h-5zM986 76h4v1h-4zM972 78h2v5h-2zM983 78h2v5h-2zM987 78h3v5h-3zM974 78h2l2.5 3.5l2.5-3.5h2l-3.5 5h-2z" fill="#f4f4f4" shape-rendering="auto"/></svg><div class="t" style="right:1495px;top:64px;font-size:11px;font-weight:bold;color:#00ffff;">-32</div><div class="t" style="left:994px;top:64px;font-size:11px;font-weight:bold;color:#ffff00;">-32</div><div class="t" style="right:1495px;top:113px;font-size:11px;font-weight:bold;color:#00ffff;">-40</div><div class="t" style="left:994px;top:113px;font-size:11px;font-weight:bold;color:#ffff00;">-40</div><div class="t" style="right:1495px;top:162px;font-size:11px;font-weight:bold;color:#00ffff;">-48</div><div class="t" style="left:994px;top:162px;font-size:11px;font-weight:bold;color:#ffff00;">-48</div><div class="t" style="right:1495px;top:211px;font-size:11px;font-weight:bold;color:#00ffff;">-56</div><div class="t" style="left:994px;top:211px;font-size:11px;font-weight:bold;color:#ffff00;">-56</div><div class="t" style="right:1495px;top:260px;font-size:11px;font-weight:bold;color:#00ffff;">-64</div><div class="t" style="left:994px;top:260px;font-size:11px;font-weight:bold;color:#ffff00;">-64</div><div class="t" style="right:1495px;top:310px;font-size:11px;font-weight:bold;color:#00ffff;">-72</div><div class="t" style="left:994px;top:310px;font-size:11px;font-weight:bold;color:#ffff00;">-72</div><div class="t" style="right:1495px;top:359px;font-size:11px;font-weight:bold;color:#00ffff;">-80</div><div class="t" style="left:994px;top:359px;font-size:11px;font-weight:bold;color:#ffff00;">-80</div><div class="t" style="right:1495px;top:408px;font-size:11px;font-weight:bold;color:#00ffff;">-88</div><div class="t" style="left:994px;top:408px;font-size:11px;font-weight:bold;color:#ffff00;">-88</div><div class="t" style="right:1495px;top:457px;font-size:11px;font-weight:bold;color:#00ffff;">-96</div><div class="t" style="left:994px;top:457px;font-size:11px;font-weight:bold;color:#ffff00;">-96</div><div class="t" style="right:1495px;top:506px;font-size:11px;font-weight:bold;color:#00ffff;">-104</div><div class="t" style="left:994px;top:506px;font-size:11px;font-weight:bold;color:#ffff00;">-104</div><div class="t" style="right:1495px;top:556px;font-size:11px;font-weight:bold;color:#00ffff;">-112</div><div class="t" style="left:994px;top:556px;font-size:11px;font-weight:bold;color:#ffff00;">-112</div><div class="t" style="left:36px;top:46px;font-size:11px;font-weight:bold;color:#00ffff;">A(dBV)</div><div class="t" style="left:992px;top:46px;font-size:11px;font-weight:bold;color:#ffff00;">B(dBV)</div><div class="t" style="left:73px;transform:translateX(-50%);top:565px;font-size:11px;font-weight:bold;color:#fff;">20</div><div class="t" style="left:192px;transform:translateX(-50%);top:565px;font-size:11px;font-weight:bold;color:#fff;">50</div><div class="t" style="left:282px;transform:translateX(-50%);top:565px;font-size:11px;font-weight:bold;color:#fff;">100</div><div class="t" style="left:372px;transform:translateX(-50%);top:565px;font-size:11px;font-weight:bold;color:#fff;">200</div><div class="t" style="left:490px;transform:translateX(-50%);top:565px;font-size:11px;font-weight:bold;color:#fff;">500</div><div class="t" style="left:580px;transform:translateX(-50%);top:565px;font-size:11px;font-weight:bold;color:#fff;">1k</div><div class="t" style="left:670px;transform:translateX(-50%);top:565px;font-size:11px;font-weight:bold;color:#fff;">2k</div><div class="t" style="left:788px;transform:translateX(-50%);top:565px;font-size:11px;font-weight:bold;color:#fff;">5k</div><div class="t" style="left:878px;transform:translateX(-50%);top:565px;font-size:11px;font-weight:bold;color:#fff;">10k</div><div class="t" style="left:968px;transform:translateX(-50%);top:565px;font-size:11px;font-weight:bold;color:#fff;">20k</div><div class="t" style="left:993px;top:573px;font-size:11px;font-weight:bold;color:#fff;">Hz</div><div class="t" style="left:318px;top:34px;font-size:11px;font-weight:bold;color:#00ffff;">A: Peak Frequency= 19.628730</div><div class="t" style="left:486px;top:34px;font-size:11px;font-weight:bold;color:#00ffff;">kHz</div><div class="t" style="left:510px;top:34px;font-size:11px;font-weight:bold;color:#00ffff;">Bandwidth= 19.594849</div><div class="t" style="left:635px;top:34px;font-size:11px;font-weight:bold;color:#00ffff;">kHz ~</div><div class="t" style="left:670px;top:34px;font-size:11px;font-weight:bold;color:#00ffff;">19.779785</div><div class="t" style="left:728px;top:34px;font-size:11px;font-weight:bold;color:#00ffff;">kHz</div><div class="t" style="left:318px;top:45px;font-size:11px;font-weight:bold;color:#ffff00;">B: Peak Frequency= 19.628732</div><div class="t" style="left:486px;top:45px;font-size:11px;font-weight:bold;color:#ffff00;">kHz</div><div class="t" style="left:510px;top:45px;font-size:11px;font-weight:bold;color:#ffff00;">Bandwidth= 19.594849</div><div class="t" style="left:635px;top:45px;font-size:11px;font-weight:bold;color:#ffff00;">kHz ~</div><div class="t" style="left:670px;top:45px;font-size:11px;font-weight:bold;color:#ffff00;">19.779785</div><div class="t" style="left:728px;top:45px;font-size:11px;font-weight:bold;color:#ffff00;">kHz</div><div class="a" style="left:27px;top:573px;width:73px;height:12px;background:#fff"></div><div class="t" style="left:28px;top:574px;font-size:11px;font-weight:bold;color:#000;">Zero Padding</div><div class="t" style="left:108px;top:574px;font-size:11px;font-weight:bold;color:#fff;">Resolution: 0.366211Hz, 1Hz (real)</div><div class="t" style="left:417px;top:574px;font-size:11px;font-weight:bold;color:#fff;">AMPLITUDE SPECTRUM in dBV (Vr=1 Vrms)</div><div class="t" style="left:834px;top:574px;font-size:11px;font-weight:bold;color:#fff;">Averaged Frames: 182</div><div class="a" style="left:1068px;top:6px;width:242px;height:560px;background:#f0f0f0;border:1px solid #f7f7f7;box-shadow:2px 3px 7px rgba(0,0,0,.35)"></div><div class="a" style="left:1068px;top:6px;width:242px;height:28px;background:#fff"></div><svg class="a" style="left:1071px;top:12px" width="16" height="16" viewBox="0 0 16 16" shape-rendering="crispEdges"><rect width="16" height="16" fill="#ffff00"/><path d="M3 0h1v1h-1zM4 0h1v1h-1zM5 0h1v1h-1zM11 0h1v1h-1zM12 0h1v1h-1zM13 0h1v1h-1zM2 1h1v1h-1zM6 1h1v1h-1zM10 1h1v1h-1zM14 1h1v1h-1zM2 2h1v1h-1zM6 2h1v1h-1zM10 2h1v1h-1zM14 2h1v1h-1zM0 3h1v1h-1zM1 3h1v1h-1zM7 3h1v1h-1zM8 3h1v1h-1zM9 3h1v1h-1zM15 3h1v1h-1z" fill="#ff0000"/><path d="M1 5h1v1h-1zM2 5h1v1h-1zM3 5h1v1h-1zM4 5h1v1h-1zM7 5h1v1h-1zM8 5h1v1h-1zM9 5h1v1h-1zM10 5h1v1h-1zM13 5h1v1h-1zM14 5h1v1h-1zM15 5h1v1h-1zM1 6h1v1h-1zM4 6h1v1h-1zM7 6h1v1h-1zM10 6h1v1h-1zM13 6h1v1h-1zM1 7h1v1h-1zM4 7h1v1h-1zM7 7h1v1h-1zM10 7h1v1h-1zM13 7h1v1h-1zM0 8h1v1h-1zM1 8h1v1h-1zM4 8h1v1h-1zM5 8h1v1h-1zM6 8h1v1h-1zM7 8h1v1h-1zM10 8h1v1h-1zM11 8h1v1h-1zM12 8h1v1h-1zM13 8h1v1h-1z" fill="#00ff00"/><path d="M0 14h1v1h-1zM1 13h1v1h-1zM2 11h1v1h-1zM2 12h1v1h-1zM3 10h1v1h-1zM4 11h1v1h-1zM5 12h1v1h-1zM5 13h1v1h-1zM6 14h1v1h-1zM7 13h1v1h-1zM8 11h1v1h-1zM8 12h1v1h-1zM9 10h1v1h-1zM10 11h1v1h-1zM11 12h1v1h-1zM11 13h1v1h-1zM12 14h1v1h-1zM13 13h1v1h-1zM14 11h1v1h-1zM14 12h1v1h-1zM15 10h1v1h-1z" fill="#0000ff"/></svg><div class="t" style="left:1091.3px;top:15px;font-size:12px;font-weight:normal;color:#9da3aa;letter-spacing:0.25px;">Signal Ge...</div><div class="a" style="left:1181px;top:20px;width:10px;height:1px;background:#b4b4b4"></div><div class="a" style="left:1230px;top:15px;width:10px;height:10px;border:1px solid #dcdcdc"></div><svg class="a" style="left:1280px;top:15px" width="11" height="11" viewBox="0 0 11 11"><path d="M0.5 0.5L10.5 10.5M10.5 0.5L0.5 10.5" stroke="#9e9e9e" stroke-width="1.1"/></svg><div class="a" style="left:1073px;top:42px;width:13px;height:13px;background:#fff;border-top:1px solid #a0a0a0;border-left:1px solid #a0a0a0;border-right:1px solid #fff;border-bottom:1px solid #fff;box-shadow:inset 1px 1px 0 #696969,inset -1px -1px 0 #e3e3e3"></div><svg class="a" style="left:1073px;top:42px" width="13" height="13" viewBox="0 0 13 13" shape-rendering="crispEdges"><path d="M3 5h1v3h-1zM4 6h1v3h-1zM5 7h1v3h-1zM6 6h1v3h-1zM7 5h1v3h-1zM8 4h1v3h-1zM9 3h1v3h-1z" fill="#000"/></svg><div class="t" style="left:1091.3px;top:43px;font-size:11px;font-weight:normal;color:#000;letter-spacing:-0.2px;">Show Editor</div><div class="a" style="left:1154px;top:39px;width:127px;height:21px;background:#fff;border-top:1px solid #a0a0a0;border-left:1px solid #a0a0a0;border-right:1px solid #fff;border-bottom:1px solid #fff;box-shadow:inset 1px 1px 0 #696969,inset -1px -1px 0 #e3e3e3"></div><div class="a" style="left:1261px;top:41px;width:18px;height:17px;background:#f0f0f0;border-top:1px solid #e3e3e3;border-left:1px solid #e3e3e3;border-right:1px solid #696969;border-bottom:1px solid #696969;box-shadow:inset 1px 1px 0 #fff,inset -1px -1px 0 #a0a0a0"></div><div class="a" style="left:1267px;top:47px;width:0;height:0;border-left:3px solid transparent;border-right:4px solid transparent;border-top:4px solid #000"></div><div class="t" style="left:1159px;top:44px;font-size:11px;font-weight:normal;color:#000;letter-spacing:-0.2px;">No Loopback</div><div class="a" style="left:1283px;top:37px;width:24px;height:23px;background:#f0f0f0;border-top:1px solid #e3e3e3;border-left:1px solid #e3e3e3;border-right:1px solid #696969;border-bottom:1px solid #696969;box-shadow:inset 1px 1px 0 #fff,inset -1px -1px 0 #a0a0a0"></div><div class="a" style="left:1290px;top:44px;width:10px;height:10px;background:#00ff00"></div><div class="t" style="left:1071.3px;top:70px;font-size:11px;font-weight:normal;color:#8f8f8f;letter-spacing:-0.2px;">Start OSC after (s)</div><div class="a" style="left:1163px;top:65px;width:67px;height:19px;background:#f0f0f0;border-top:1px solid #a0a0a0;border-left:1px solid #a0a0a0;border-right:1px solid #fff;border-bottom:1px solid #fff;box-shadow:inset 1px 1px 0 #696969,inset -1px -1px 0 #e3e3e3"></div><div class="t" style="left:1167px;top:69px;font-size:11px;font-weight:normal;color:#8f8f8f;letter-spacing:-0.2px;">0</div><div class="a" style="left:1233px;top:68px;width:13px;height:13px;background:#f0f0f0;border-top:1px solid #a0a0a0;border-left:1px solid #a0a0a0;border-right:1px solid #fff;border-bottom:1px solid #fff;box-shadow:inset 1px 1px 0 #696969,inset -1px -1px 0 #e3e3e3"></div><div class="t" style="left:1251.3px;top:70px;font-size:11px;font-weight:normal;color:#8f8f8f;letter-spacing:-0.2px;">Echo Only</div><div class="a" style="left:1070px;top:97px;width:209px;height:36px;border:1px solid #a0a0a0"></div><div class="a" style="left:1071px;top:98px;width:207px;height:34px;border-top:1px solid #fff;border-left:1px solid #fff"></div><div class="a" style="left:1070px;top:133px;width:210px;height:1px;background:#fff"></div><div class="a" style="left:1279px;top:97px;width:1px;height:37px;background:#fff"></div><div class="a" style="left:1077px;top:92px;width:104px;height:12px;background:#f0f0f0"></div><div class="t" style="left:1078.3px;top:94px;font-size:11px;font-weight:normal;color:#000;letter-spacing:-0.2px;">Sampling Parameters</div><div class="a" style="left:1076px;top:107px;width:100px;height:20px;background:#fff;border-top:1px solid #a0a0a0;border-left:1px solid #a0a0a0;border-right:1px solid #fff;border-bottom:1px solid #fff;box-shadow:inset 1px 1px 0 #696969,inset -1px -1px 0 #e3e3e3"></div><div class="a" style="left:1156px;top:109px;width:18px;height:16px;background:#f0f0f0;border-top:1px solid #e3e3e3;border-left:1px solid #e3e3e3;border-right:1px solid #696969;border-bottom:1px solid #696969;box-shadow:inset 1px 1px 0 #fff,inset -1px -1px 0 #a0a0a0"></div><div class="a" style="left:1162px;top:115px;width:0;height:0;border-left:3px solid transparent;border-right:4px solid transparent;border-top:4px solid #000"></div><div class="t" style="left:1081px;top:112px;font-size:11px;font-weight:normal;color:#000;letter-spacing:-0.2px;">48kHz</div><div class="a" style="left:1178px;top:107px;width:44px;height:20px;background:#fff;border-top:1px solid #a0a0a0;border-left:1px solid #a0a0a0;border-right:1px solid #fff;border-bottom:1px solid #fff;box-shadow:inset 1px 1px 0 #696969,inset -1px -1px 0 #e3e3e3"></div><div class="a" style="left:1202px;top:109px;width:18px;height:16px;background:#f0f0f0;border-top:1px solid #e3e3e3;border-left:1px solid #e3e3e3;border-right:1px solid #696969;border-bottom:1px solid #696969;box-shadow:inset 1px 1px 0 #fff,inset -1px -1px 0 #a0a0a0"></div><div class="a" style="left:1208px;top:115px;width:0;height:0;border-left:3px solid transparent;border-right:4px solid transparent;border-top:4px solid #000"></div><div class="t" style="left:1182px;top:112px;font-size:11px;font-weight:normal;color:#000;letter-spacing:-0.2px;">A&amp;B</div><div class="a" style="left:1224px;top:107px;width:52px;height:20px;background:#fff;border-top:1px solid #a0a0a0;border-left:1px solid #a0a0a0;border-right:1px solid #fff;border-bottom:1px solid #fff;box-shadow:inset 1px 1px 0 #696969,inset -1px -1px 0 #e3e3e3"></div><div class="a" style="left:1256px;top:109px;width:18px;height:16px;background:#f0f0f0;border-top:1px solid #e3e3e3;border-left:1px solid #e3e3e3;border-right:1px solid #696969;border-bottom:1px solid #696969;box-shadow:inset 1px 1px 0 #fff,inset -1px -1px 0 #a0a0a0"></div><div class="a" style="left:1262px;top:115px;width:0;height:0;border-left:3px solid transparent;border-right:4px solid transparent;border-top:4px solid #000"></div><div class="t" style="left:1228px;top:112px;font-size:11px;font-weight:normal;color:#000;letter-spacing:-0.2px;">24Bit</div><div class="a" style="left:1283px;top:91px;width:24px;height:23px;background:#f0f0f0;border-top:1px solid #e3e3e3;border-left:1px solid #e3e3e3;border-right:1px solid #696969;border-bottom:1px solid #696969;box-shadow:inset 1px 1px 0 #fff,inset -1px -1px 0 #a0a0a0"></div><svg class="a" style="left:1288px;top:96px" width="14" height="14" viewBox="0 0 14 14" shape-rendering="crispEdges"><path d="M0 0h14v14h-14z" fill="#6d6d6d"/><path d="M1 1h12v12h-12z" fill="#b5b26a"/><path d="M3 1h8v6h-8z" fill="#6d6d6d"/><path d="M3 1h8v5h-8z" fill="#f4f4f4"/><path d="M3 9h8v5h-8z" fill="#6d6d6d"/><path d="M8 10h2v3h-2z" fill="#f4f4f4"/><path d="M12 2h1v1h-1z" fill="#f4f4f4"/></svg><div class="a" style="left:1283px;top:115px;width:24px;height:23px;background:#f0f0f0;border-top:1px solid #e3e3e3;border-left:1px solid #e3e3e3;border-right:1px solid #696969;border-bottom:1px solid #696969;box-shadow:inset 1px 1px 0 #fff,inset -1px -1px 0 #a0a0a0"></div><svg class="a" style="left:1286px;top:119px" width="18" height="17" viewBox="0 0 18 17" shape-rendering="crispEdges"><path d="M1 2h16v1h-16zM1 5h16v1h-16zM1 8h16v1h-16zM1 11h16v1h-16zM1 14h16v1h-16z" fill="#a8a8a8"/><path d="M4 5h2v10h-2zM6 4h3v2h-3zM9 3h2v2h-2zM11 2h2v2h-2zM12 1h2v11h-2zM2 13h3v3h-3zM10 10h3v3h-3z" fill="#f26a6a"/></svg><div class="a" style="left:1079px;top:145px;width:85px;height:20px;background:#fff;border-top:1px solid #a0a0a0;border-left:1px solid #a0a0a0;border-right:1px solid #fff;border-bottom:1px solid #fff;box-shadow:inset 1px 1px 0 #696969,inset -1px -1px 0 #e3e3e3"></div><div class="a" style="left:1144px;top:147px;width:18px;height:16px;background:#f0f0f0;border-top:1px solid #e3e3e3;border-left:1px solid #e3e3e3;border-right:1px solid #696969;border-bottom:1px solid #696969;box-shadow:inset 1px 1px 0 #fff,inset -1px -1px 0 #a0a0a0"></div><div class="a" style="left:1150px;top:153px;width:0;height:0;border-left:3px solid transparent;border-right:4px solid transparent;border-top:4px solid #000"></div><div class="t" style="left:1083px;top:150px;font-size:11px;font-weight:normal;color:#000;letter-spacing:-0.2px;">WhiteNoise</div><div class="a" style="left:1176px;top:145px;width:23px;height:21px;background:#f0f0f0;border-top:1px solid #e3e3e3;border-left:1px solid #e3e3e3;border-right:1px solid #696969;border-bottom:1px solid #696969;box-shadow:inset 1px 1px 0 #fff,inset -1px -1px 0 #a0a0a0"></div><div class="a" style="left:1184px;top:158px;width:1px;height:1px;background:#000"></div><div class="a" style="left:1187px;top:158px;width:1px;height:1px;background:#000"></div><div class="a" style="left:1190px;top:158px;width:1px;height:1px;background:#000"></div><div class="a" style="left:1212px;top:145px;width:85px;height:20px;background:#fff;border-top:1px solid #a0a0a0;border-left:1px solid #a0a0a0;border-right:1px solid #fff;border-bottom:1px solid #fff;box-shadow:inset 1px 1px 0 #696969,inset -1px -1px 0 #e3e3e3"></div><div class="a" style="left:1277px;top:147px;width:18px;height:16px;background:#f0f0f0;border-top:1px solid #e3e3e3;border-left:1px solid #e3e3e3;border-right:1px solid #696969;border-bottom:1px solid #696969;box-shadow:inset 1px 1px 0 #fff,inset -1px -1px 0 #a0a0a0"></div><div class="a" style="left:1283px;top:153px;width:0;height:0;border-left:3px solid transparent;border-right:4px solid transparent;border-top:4px solid #000"></div><div class="t" style="left:1216px;top:150px;font-size:11px;font-weight:normal;color:#000;letter-spacing:-0.2px;">WhiteNoise</div><div class="a" style="left:1071px;top:175px;width:62px;height:19px;background:#fff;border-top:1px solid #a0a0a0;border-left:1px solid #a0a0a0;border-right:1px solid #fff;border-bottom:1px solid #fff;box-shadow:inset 1px 1px 0 #696969,inset -1px -1px 0 #e3e3e3"></div><div class="t" style="left:1074px;top:180px;font-size:11px;font-weight:normal;color:#000;letter-spacing:-0.2px;">0</div><div class="a" style="left:1134px;top:172px;width:19px;height:11px;background:#f0f0f0;border-top:1px solid #e3e3e3;border-left:1px solid #e3e3e3;border-right:1px solid #696969;border-bottom:1px solid #696969;box-shadow:inset 1px 1px 0 #fff,inset -1px -1px 0 #a0a0a0"></div><div class="a" style="left:1134px;top:184px;width:19px;height:11px;background:#f0f0f0;border-top:1px solid #e3e3e3;border-left:1px solid #e3e3e3;border-right:1px solid #696969;border-bottom:1px solid #696969;box-shadow:inset 1px 1px 0 #fff,inset -1px -1px 0 #a0a0a0"></div><div class="a" style="left:1142px;top:177px;width:3px;height:1px;background:#000"></div><div class="a" style="left:1143px;top:176px;width:1px;height:1px;background:#000"></div><div class="a" style="left:1142px;top:189px;width:3px;height:1px;background:#000"></div><div class="a" style="left:1143px;top:190px;width:1px;height:1px;background:#000"></div><div class="t" style="left:1156.3px;top:180px;font-size:11px;font-weight:normal;color:#000;letter-spacing:-0.2px;">DC Offset (V)</div><div class="a" style="left:1227px;top:175px;width:62px;height:19px;background:#fff;border-top:1px solid #a0a0a0;border-left:1px solid #a0a0a0;border-right:1px solid #fff;border-bottom:1px solid #fff;box-shadow:inset 1px 1px 0 #696969,inset -1px -1px 0 #e3e3e3"></div><div class="t" style="left:1230px;top:180px;font-size:11px;font-weight:normal;color:#000;letter-spacing:-0.2px;">0</div><div class="a" style="left:1290px;top:172px;width:19px;height:11px;background:#f0f0f0;border-top:1px solid #e3e3e3;border-left:1px solid #e3e3e3;border-right:1px solid #696969;border-bottom:1px solid #696969;box-shadow:inset 1px 1px 0 #fff,inset -1px -1px 0 #a0a0a0"></div><div class="a" style="left:1290px;top:184px;width:19px;height:11px;background:#f0f0f0;border-top:1px solid #e3e3e3;border-left:1px solid #e3e3e3;border-right:1px solid #696969;border-bottom:1px solid #696969;box-shadow:inset 1px 1px 0 #fff,inset -1px -1px 0 #a0a0a0"></div><div class="a" style="left:1298px;top:177px;width:3px;height:1px;background:#000"></div><div class="a" style="left:1299px;top:176px;width:1px;height:1px;background:#000"></div><div class="a" style="left:1298px;top:189px;width:3px;height:1px;background:#000"></div><div class="a" style="left:1299px;top:190px;width:1px;height:1px;background:#000"></div><div class="t" style="left:1134.3px;top:201px;font-size:11px;font-weight:normal;color:#000;letter-spacing:-0.2px;">Output Frequency (Hz)</div><div class="a" style="left:1103px;top:220px;width:88px;height:19px;background:#f0f0f0;border-top:1px solid #a0a0a0;border-left:1px solid #a0a0a0;border-right:1px solid #fff;border-bottom:1px solid #fff;box-shadow:inset 1px 1px 0 #696969,inset -1px -1px 0 #e3e3e3"></div><div class="a" style="left:1171px;top:222px;width:18px;height:15px;background:#f0f0f0;border-top:1px solid #e3e3e3;border-left:1px solid #e3e3e3;border-right:1px solid #696969;border-bottom:1px solid #696969;box-shadow:inset 1px 1px 0 #fff,inset -1px -1px 0 #a0a0a0"></div><div class="a" style="left:1177px;top:227px;width:0;height:0;border-left:3px solid transparent;border-right:4px solid transparent;border-top:4px solid #a0a0a0"></div><div class="t" style="left:1107px;top:223px;font-size:11px;font-weight:normal;color:#8f8f8f;letter-spacing:-0.2px;">1000</div><div class="a" style="left:1191px;top:220px;width:89px;height:19px;background:#f0f0f0;border-top:1px solid #a0a0a0;border-left:1px solid #a0a0a0;border-right:1px solid #fff;border-bottom:1px solid #fff;box-shadow:inset 1px 1px 0 #696969,inset -1px -1px 0 #e3e3e3"></div><div class="a" style="left:1260px;top:222px;width:18px;height:15px;background:#f0f0f0;border-top:1px solid #e3e3e3;border-left:1px solid #e3e3e3;border-right:1px solid #696969;border-bottom:1px solid #696969;box-shadow:inset 1px 1px 0 #fff,inset -1px -1px 0 #a0a0a0"></div><div class="a" style="left:1266px;top:227px;width:0;height:0;border-left:3px solid transparent;border-right:4px solid transparent;border-top:4px solid #a0a0a0"></div><div class="t" style="left:1195px;top:223px;font-size:11px;font-weight:normal;color:#8f8f8f;letter-spacing:-0.2px;">1000</div><div class="t" style="left:1136.3px;top:251px;font-size:11px;font-weight:normal;color:#000;letter-spacing:-0.2px;">Output Amplitude(Vp)</div><div class="a" style="left:1103px;top:271px;width:88px;height:19px;background:#fff;border-top:1px solid #a0a0a0;border-left:1px solid #a0a0a0;border-right:1px solid #fff;border-bottom:1px solid #fff;box-shadow:inset 1px 1px 0 #696969,inset -1px -1px 0 #e3e3e3"></div><div class="a" style="left:1171px;top:273px;width:18px;height:15px;background:#f0f0f0;border-top:1px solid #e3e3e3;border-left:1px solid #e3e3e3;border-right:1px solid #696969;border-bottom:1px solid #696969;box-shadow:inset 1px 1px 0 #fff,inset -1px -1px 0 #a0a0a0"></div><div class="a" style="left:1177px;top:278px;width:0;height:0;border-left:3px solid transparent;border-right:4px solid transparent;border-top:4px solid #000"></div><div class="t" style="left:1107px;top:275px;font-size:11px;font-weight:normal;color:#000;letter-spacing:-0.2px;">1</div><div class="a" style="left:1191px;top:271px;width:89px;height:19px;background:#fff;border-top:1px solid #a0a0a0;border-left:1px solid #a0a0a0;border-right:1px solid #fff;border-bottom:1px solid #fff;box-shadow:inset 1px 1px 0 #696969,inset -1px -1px 0 #e3e3e3"></div><div class="a" style="left:1260px;top:273px;width:18px;height:15px;background:#f0f0f0;border-top:1px solid #e3e3e3;border-left:1px solid #e3e3e3;border-right:1px solid #696969;border-bottom:1px solid #696969;box-shadow:inset 1px 1px 0 #fff,inset -1px -1px 0 #a0a0a0"></div><div class="a" style="left:1266px;top:278px;width:0;height:0;border-left:3px solid transparent;border-right:4px solid transparent;border-top:4px solid #000"></div><div class="t" style="left:1195px;top:275px;font-size:11px;font-weight:normal;color:#000;letter-spacing:-0.2px;">1</div><div class="t" style="left:1107.3px;top:303px;font-size:11px;font-weight:normal;color:#8f8f8f;letter-spacing:-0.2px;">Output Phase Difference (Degree)</div><div class="a" style="left:1152px;top:323px;width:73px;height:19px;background:#f0f0f0;border-top:1px solid #a0a0a0;border-left:1px solid #a0a0a0;border-right:1px solid #fff;border-bottom:1px solid #fff;box-shadow:inset 1px 1px 0 #696969,inset -1px -1px 0 #e3e3e3"></div><div class="a" style="left:1205px;top:325px;width:18px;height:15px;background:#f0f0f0;border-top:1px solid #e3e3e3;border-left:1px solid #e3e3e3;border-right:1px solid #696969;border-bottom:1px solid #696969;box-shadow:inset 1px 1px 0 #fff,inset -1px -1px 0 #a0a0a0"></div><div class="a" style="left:1211px;top:330px;width:0;height:0;border-left:3px solid transparent;border-right:4px solid transparent;border-top:4px solid #a0a0a0"></div><div class="t" style="left:1155px;top:327px;font-size:11px;font-weight:normal;color:#8f8f8f;letter-spacing:-0.2px;">0</div><div class="a" style="left:1076px;top:209px;width:1px;height:133px;background:#a0a0a0"></div><div class="a" style="left:1077px;top:209px;width:1px;height:133px;background:#696969"></div><div class="a" style="left:1078px;top:209px;width:1px;height:133px;background:#fff"></div><div class="a" style="left:1072px;top:332px;width:11px;height:5px;background:#f0f0f0;border-top:1px solid #e3e3e3;border-left:1px solid #e3e3e3;border-right:1px solid #696969;border-bottom:1px solid #696969;box-shadow:inset 1px 1px 0 #fff,inset -1px -1px 0 #a0a0a0"></div><div class="a" style="left:1076px;top:337px;width:3px;height:4px;background:#f0f0f0;border-right:1px solid #696969;border-left:1px solid #fff"></div><div class="a" style="left:1091px;top:209px;width:1px;height:133px;background:#a0a0a0"></div><div class="a" style="left:1092px;top:209px;width:1px;height:133px;background:#696969"></div><div class="a" style="left:1093px;top:209px;width:1px;height:133px;background:#fff"></div><div class="a" style="left:1087px;top:319px;width:11px;height:5px;background:#f0f0f0;border-top:1px solid #e3e3e3;border-left:1px solid #e3e3e3;border-right:1px solid #696969;border-bottom:1px solid #696969;box-shadow:inset 1px 1px 0 #fff,inset -1px -1px 0 #a0a0a0"></div><div class="a" style="left:1091px;top:324px;width:3px;height:4px;background:#f0f0f0;border-right:1px solid #696969;border-left:1px solid #fff"></div><div class="a" style="left:1286px;top:209px;width:1px;height:133px;background:#a0a0a0"></div><div class="a" style="left:1287px;top:209px;width:1px;height:133px;background:#696969"></div><div class="a" style="left:1288px;top:209px;width:1px;height:133px;background:#fff"></div><div class="a" style="left:1282px;top:319px;width:11px;height:5px;background:#f0f0f0;border-top:1px solid #e3e3e3;border-left:1px solid #e3e3e3;border-right:1px solid #696969;border-bottom:1px solid #696969;box-shadow:inset 1px 1px 0 #fff,inset -1px -1px 0 #a0a0a0"></div><div class="a" style="left:1286px;top:324px;width:3px;height:4px;background:#f0f0f0;border-right:1px solid #696969;border-left:1px solid #fff"></div><div class="a" style="left:1298px;top:209px;width:1px;height:133px;background:#a0a0a0"></div><div class="a" style="left:1299px;top:209px;width:1px;height:133px;background:#696969"></div><div class="a" style="left:1300px;top:209px;width:1px;height:133px;background:#fff"></div><div class="a" style="left:1294px;top:332px;width:11px;height:5px;background:#f0f0f0;border-top:1px solid #e3e3e3;border-left:1px solid #e3e3e3;border-right:1px solid #696969;border-bottom:1px solid #696969;box-shadow:inset 1px 1px 0 #fff,inset -1px -1px 0 #a0a0a0"></div><div class="a" style="left:1298px;top:337px;width:3px;height:4px;background:#f0f0f0;border-right:1px solid #696969;border-left:1px solid #fff"></div><div class="t" style="left:1070.3px;top:348px;font-size:11px;font-weight:normal;color:#000;letter-spacing:-0.2px;">-17.0dBFS</div><div class="t" style="left:1260.3px;top:348px;font-size:11px;font-weight:normal;color:#000;letter-spacing:-0.2px;">-17.0dBFS</div><div class="a" style="left:1127px;top:352px;width:120px;height:1px;background:#a0a0a0"></div><div class="a" style="left:1127px;top:353px;width:120px;height:1px;background:#696969"></div><div class="a" style="left:1127px;top:354px;width:120px;height:1px;background:#fff"></div><div class="a" style="left:1185px;top:348px;width:6px;height:10px;background:#f0f0f0;border-top:1px solid #e3e3e3;border-left:1px solid #e3e3e3;border-right:1px solid #696969;border-bottom:1px solid #696969;box-shadow:inset 1px 1px 0 #fff,inset -1px -1px 0 #a0a0a0"></div><div class="a" style="left:1070px;top:366px;width:238px;height:45px;border:1px solid #a0a0a0"></div><div class="a" style="left:1071px;top:367px;width:236px;height:43px;border-top:1px solid #fff;border-left:1px solid #fff"></div><div class="a" style="left:1070px;top:411px;width:239px;height:1px;background:#fff"></div><div class="a" style="left:1308px;top:366px;width:1px;height:46px;background:#fff"></div><div class="a" style="left:1077px;top:371px;width:13px;height:13px;background:#fff;border-top:1px solid #a0a0a0;border-left:1px solid #a0a0a0;border-right:1px solid #fff;border-bottom:1px solid #fff;box-shadow:inset 1px 1px 0 #696969,inset -1px -1px 0 #e3e3e3"></div><div class="t" style="left:1095.3px;top:374px;font-size:11px;font-weight:normal;color:#000;letter-spacing:-0.2px;">Mask</div><div class="a" style="left:1140px;top:370px;width:15px;height:15px;background:#f0f0f0;border-top:1px solid #e3e3e3;border-left:1px solid #e3e3e3;border-right:1px solid #696969;border-bottom:1px solid #696969;box-shadow:inset 1px 1px 0 #fff,inset -1px -1px 0 #a0a0a0"></div><div class="a" style="left:1144px;top:381px;width:1px;height:1px;background:#808080"></div><div class="a" style="left:1147px;top:381px;width:1px;height:1px;background:#808080"></div><div class="a" style="left:1150px;top:381px;width:1px;height:1px;background:#808080"></div><div class="t" style="left:1176.3px;top:374px;font-size:11px;font-weight:normal;color:#8f8f8f;letter-spacing:-0.2px;">On (s)</div><div class="t" style="left:1251.3px;top:374px;font-size:11px;font-weight:normal;color:#8f8f8f;letter-spacing:-0.2px;">Off (s)</div><div class="a" style="left:1077px;top:391px;width:13px;height:13px;background:#f0f0f0;border-top:1px solid #a0a0a0;border-left:1px solid #a0a0a0;border-right:1px solid #fff;border-bottom:1px solid #fff;box-shadow:inset 1px 1px 0 #696969,inset -1px -1px 0 #e3e3e3"></div><svg class="a" style="left:1077px;top:391px" width="13" height="13" viewBox="0 0 13 13" shape-rendering="crispEdges"><path d="M3 5h1v3h-1zM4 6h1v3h-1zM5 7h1v3h-1zM6 6h1v3h-1zM7 5h1v3h-1zM8 4h1v3h-1zM9 3h1v3h-1z" fill="#a0a0a0"/></svg><div class="t" style="left:1095.3px;top:393px;font-size:11px;font-weight:normal;color:#8f8f8f;letter-spacing:-0.2px;">Phase Lock</div><div class="a" style="left:1163px;top:389px;width:65px;height:19px;background:#f0f0f0;border-top:1px solid #a0a0a0;border-left:1px solid #a0a0a0;border-right:1px solid #fff;border-bottom:1px solid #fff;box-shadow:inset 1px 1px 0 #696969,inset -1px -1px 0 #e3e3e3"></div><div class="t" style="left:1167px;top:393px;font-size:11px;font-weight:normal;color:#8f8f8f;letter-spacing:-0.2px;">1</div><div class="a" style="left:1236px;top:389px;width:65px;height:19px;background:#f0f0f0;border-top:1px solid #a0a0a0;border-left:1px solid #a0a0a0;border-right:1px solid #fff;border-bottom:1px solid #fff;box-shadow:inset 1px 1px 0 #696969,inset -1px -1px 0 #e3e3e3"></div><div class="t" style="left:1240px;top:393px;font-size:11px;font-weight:normal;color:#8f8f8f;letter-spacing:-0.2px;">0</div><div class="a" style="left:1070px;top:418px;width:238px;height:44px;border:1px solid #a0a0a0"></div><div class="a" style="left:1071px;top:419px;width:236px;height:42px;border-top:1px solid #fff;border-left:1px solid #fff"></div><div class="a" style="left:1070px;top:462px;width:239px;height:1px;background:#fff"></div><div class="a" style="left:1308px;top:418px;width:1px;height:45px;background:#fff"></div><div class="a" style="left:1077px;top:432px;width:13px;height:13px;background:#fff;border-top:1px solid #a0a0a0;border-left:1px solid #a0a0a0;border-right:1px solid #fff;border-bottom:1px solid #fff;box-shadow:inset 1px 1px 0 #696969,inset -1px -1px 0 #e3e3e3"></div><div class="t" style="left:1095.3px;top:434px;font-size:11px;font-weight:normal;color:#000;letter-spacing:-0.2px;">Fade</div><div class="t" style="left:1176.3px;top:424px;font-size:11px;font-weight:normal;color:#8f8f8f;letter-spacing:-0.2px;">In (s)</div><div class="t" style="left:1251.3px;top:424px;font-size:11px;font-weight:normal;color:#8f8f8f;letter-spacing:-0.2px;">Out (s)</div><div class="a" style="left:1163px;top:440px;width:65px;height:19px;background:#f0f0f0;border-top:1px solid #a0a0a0;border-left:1px solid #a0a0a0;border-right:1px solid #fff;border-bottom:1px solid #fff;box-shadow:inset 1px 1px 0 #696969,inset -1px -1px 0 #e3e3e3"></div><div class="t" style="left:1167px;top:444px;font-size:11px;font-weight:normal;color:#8f8f8f;letter-spacing:-0.2px;">0.01</div><div class="a" style="left:1236px;top:440px;width:65px;height:19px;background:#f0f0f0;border-top:1px solid #a0a0a0;border-left:1px solid #a0a0a0;border-right:1px solid #fff;border-bottom:1px solid #fff;box-shadow:inset 1px 1px 0 #696969,inset -1px -1px 0 #e3e3e3"></div><div class="t" style="left:1240px;top:444px;font-size:11px;font-weight:normal;color:#8f8f8f;letter-spacing:-0.2px;">0.01</div><div class="a" style="left:1070px;top:467px;width:238px;height:46px;border:1px solid #a0a0a0"></div><div class="a" style="left:1071px;top:468px;width:236px;height:44px;border-top:1px solid #fff;border-left:1px solid #fff"></div><div class="a" style="left:1070px;top:513px;width:239px;height:1px;background:#fff"></div><div class="a" style="left:1308px;top:467px;width:1px;height:47px;background:#fff"></div><div class="t" style="left:1072.3px;top:473px;font-size:11px;font-weight:normal;color:#000;letter-spacing:-0.2px;">Modulation</div><div class="t" style="left:1146.3px;top:473px;font-size:11px;font-weight:normal;color:#8f8f8f;letter-spacing:-0.2px;">Carrier (Hz)</div><div class="t" style="left:1221.3px;top:473px;font-size:11px;font-weight:normal;color:#8f8f8f;letter-spacing:-0.2px;">Mod. Index (%)</div><div class="a" style="left:1073px;top:490px;width:58px;height:19px;background:#fff;border-top:1px solid #a0a0a0;border-left:1px solid #a0a0a0;border-right:1px solid #fff;border-bottom:1px solid #fff;box-shadow:inset 1px 1px 0 #696969,inset -1px -1px 0 #e3e3e3"></div><div class="a" style="left:1111px;top:492px;width:18px;height:15px;background:#f0f0f0;border-top:1px solid #e3e3e3;border-left:1px solid #e3e3e3;border-right:1px solid #696969;border-bottom:1px solid #696969;box-shadow:inset 1px 1px 0 #fff,inset -1px -1px 0 #a0a0a0"></div><div class="a" style="left:1117px;top:497px;width:0;height:0;border-left:3px solid transparent;border-right:4px solid transparent;border-top:4px solid #000"></div><div class="t" style="left:1077px;top:494px;font-size:11px;font-weight:normal;color:#000;letter-spacing:-0.2px;">NIL</div><div class="a" style="left:1146px;top:490px;width:65px;height:19px;background:#f0f0f0;border-top:1px solid #a0a0a0;border-left:1px solid #a0a0a0;border-right:1px solid #fff;border-bottom:1px solid #fff;box-shadow:inset 1px 1px 0 #696969,inset -1px -1px 0 #e3e3e3"></div><div class="t" style="left:1150px;top:494px;font-size:11px;font-weight:normal;color:#8f8f8f;letter-spacing:-0.2px;">0</div><div class="a" style="left:1227px;top:490px;width:65px;height:19px;background:#f0f0f0;border-top:1px solid #a0a0a0;border-left:1px solid #a0a0a0;border-right:1px solid #fff;border-bottom:1px solid #fff;box-shadow:inset 1px 1px 0 #696969,inset -1px -1px 0 #e3e3e3"></div><div class="t" style="left:1231px;top:494px;font-size:11px;font-weight:normal;color:#8f8f8f;letter-spacing:-0.2px;">0</div><div class="t" style="left:1069.3px;top:525px;font-size:11px;font-weight:normal;color:#000;letter-spacing:-0.2px;">Duration (s)</div><div class="a" style="left:1134px;top:520px;width:65px;height:20px;background:#f0f0f0;border-top:1px solid #a0a0a0;border-left:1px solid #a0a0a0;border-right:1px solid #fff;border-bottom:1px solid #fff;box-shadow:inset 1px 1px 0 #696969,inset -1px -1px 0 #e3e3e3"></div><div class="t" style="left:1137px;top:525px;font-size:11px;font-weight:normal;color:#8f8f8f;letter-spacing:-0.2px;">300</div><div class="a" style="left:1206px;top:523px;width:13px;height:13px;background:#fff;border-top:1px solid #a0a0a0;border-left:1px solid #a0a0a0;border-right:1px solid #fff;border-bottom:1px solid #fff;box-shadow:inset 1px 1px 0 #696969,inset -1px -1px 0 #e3e3e3"></div><svg class="a" style="left:1206px;top:523px" width="13" height="13" viewBox="0 0 13 13" shape-rendering="crispEdges"><path d="M3 5h1v3h-1zM4 6h1v3h-1zM5 7h1v3h-1zM6 6h1v3h-1zM7 5h1v3h-1zM8 4h1v3h-1zM9 3h1v3h-1z" fill="#000"/></svg><div class="t" style="left:1225.3px;top:525px;font-size:11px;font-weight:normal;color:#000;letter-spacing:-0.2px;">Loop</div><div class="a" style="left:1262px;top:523px;width:13px;height:13px;background:#f0f0f0;border-top:1px solid #a0a0a0;border-left:1px solid #a0a0a0;border-right:1px solid #fff;border-bottom:1px solid #fff;box-shadow:inset 1px 1px 0 #696969,inset -1px -1px 0 #e3e3e3"></div><div class="t" style="left:1280.3px;top:525px;font-size:11px;font-weight:normal;color:#8f8f8f;letter-spacing:-0.2px;">DDS</div><div class="a" style="left:1070px;top:547px;width:13px;height:13px;background:#fff;border-top:1px solid #a0a0a0;border-left:1px solid #a0a0a0;border-right:1px solid #fff;border-bottom:1px solid #fff;box-shadow:inset 1px 1px 0 #696969,inset -1px -1px 0 #e3e3e3"></div><div class="t" style="left:1089.3px;top:549px;font-size:11px;font-weight:normal;color:#000;letter-spacing:-0.2px;">Sweep</div><svg class="a" style="left:1147px;top:547px" width="12" height="12" viewBox="0 0 12 12"><circle cx="6" cy="6" r="5" fill="#f0f0f0"/><path d="M9.5 2.5A5 5 0 0 0 2.5 9.5" stroke="#8a8a8a" stroke-width="1.6" fill="none"/><path d="M2.5 9.5A5 5 0 0 0 9.5 2.5" stroke="#fff" stroke-width="1.4" fill="none"/><circle cx="6" cy="6" r="2.2" fill="#9a9a9a"/></svg><div class="t" style="left:1164.3px;top:549px;font-size:11px;font-weight:normal;color:#8f8f8f;letter-spacing:-0.2px;">Frequency</div><svg class="a" style="left:1228px;top:547px" width="12" height="12" viewBox="0 0 12 12"><circle cx="6" cy="6" r="5" fill="#f0f0f0"/><path d="M9.5 2.5A5 5 0 0 0 2.5 9.5" stroke="#8a8a8a" stroke-width="1.6" fill="none"/><path d="M2.5 9.5A5 5 0 0 0 9.5 2.5" stroke="#fff" stroke-width="1.4" fill="none"/></svg><div class="t" style="left:1245.3px;top:549px;font-size:11px;font-weight:normal;color:#8f8f8f;letter-spacing:-0.2px;">Amplitude</div><div class="a" style="left:0px;top:598px;width:1568px;height:23px;background:#f0f0f0;border-top:2px solid #fff"></div><div class="a" style="left:2px;top:600px;width:1px;height:21px;background:#a0a0a0"></div><div class="a" style="left:3px;top:600px;width:1px;height:21px;background:#fff"></div><div class="t" style="left:17px;top:607px;font-size:13px;font-weight:normal;color:#000;letter-spacing:0px;">F</div><div class="a" style="left:28px;top:600px;width:152px;height:24px;background:#fff;border-top:1px solid #a0a0a0;border-left:1px solid #a0a0a0;border-right:1px solid #fff;border-bottom:1px solid #fff;box-shadow:inset 1px 1px 0 #696969,inset -1px -1px 0 #e3e3e3"></div><div class="a" style="left:160px;top:602px;width:18px;height:22px;background:#f0f0f0;border-top:1px solid #e3e3e3;border-left:1px solid #e3e3e3;border-right:1px solid #696969;border-bottom:1px solid #696969;box-shadow:inset 1px 1px 0 #fff,inset -1px -1px 0 #a0a0a0"></div><div class="a" style="left:165px;top:610px;width:0;height:0;border-left:4px solid transparent;border-right:5px solid transparent;border-top:5px solid #000"></div><div class="t" style="left:32px;top:607px;font-size:13px;font-weight:normal;color:#000;letter-spacing:0px;">Auto</div><div class="a" style="left:181px;top:600px;width:121px;height:24px;background:#fff;border-top:1px solid #a0a0a0;border-left:1px solid #a0a0a0;border-right:1px solid #fff;border-bottom:1px solid #fff;box-shadow:inset 1px 1px 0 #696969,inset -1px -1px 0 #e3e3e3"></div><div class="a" style="left:282px;top:602px;width:18px;height:22px;background:#f0f0f0;border-top:1px solid #e3e3e3;border-left:1px solid #e3e3e3;border-right:1px solid #696969;border-bottom:1px solid #696969;box-shadow:inset 1px 1px 0 #fff,inset -1px -1px 0 #a0a0a0"></div><div class="a" style="left:287px;top:610px;width:0;height:0;border-left:4px solid transparent;border-right:5px solid transparent;border-top:5px solid #000"></div><div class="t" style="left:185px;top:607px;font-size:13px;font-weight:normal;color:#000;letter-spacing:0px;">×1</div><div class="t" style="left:308px;top:607px;font-size:13px;font-weight:normal;color:#000;letter-spacing:0px;">A</div><div class="a" style="left:322px;top:600px;width:154px;height:24px;background:#000;border-top:1px solid #a0a0a0;border-left:1px solid #a0a0a0;border-right:1px solid #fff;border-bottom:1px solid #fff;box-shadow:inset 1px 1px 0 #696969,inset -1px -1px 0 #e3e3e3"></div><div class="a" style="left:456px;top:602px;width:18px;height:22px;background:#f0f0f0;border-top:1px solid #e3e3e3;border-left:1px solid #e3e3e3;border-right:1px solid #696969;border-bottom:1px solid #696969;box-shadow:inset 1px 1px 0 #fff,inset -1px -1px 0 #a0a0a0"></div><div class="a" style="left:461px;top:610px;width:0;height:0;border-left:4px solid transparent;border-right:5px solid transparent;border-top:5px solid #000"></div><div class="t" style="left:326px;top:607px;font-size:13px;font-weight:normal;color:#00ffff;letter-spacing:0px;">&lt;80dB&gt;</div><div class="a" style="left:477px;top:600px;width:111px;height:24px;background:#000;border-top:1px solid #a0a0a0;border-left:1px solid #a0a0a0;border-right:1px solid #fff;border-bottom:1px solid #fff;box-shadow:inset 1px 1px 0 #696969,inset -1px -1px 0 #e3e3e3"></div><div class="a" style="left:568px;top:602px;width:18px;height:22px;background:#f0f0f0;border-top:1px solid #e3e3e3;border-left:1px solid #e3e3e3;border-right:1px solid #696969;border-bottom:1px solid #696969;box-shadow:inset 1px 1px 0 #fff,inset -1px -1px 0 #a0a0a0"></div><div class="a" style="left:573px;top:610px;width:0;height:0;border-left:4px solid transparent;border-right:5px solid transparent;border-top:5px solid #000"></div><div class="t" style="left:481px;top:607px;font-size:13px;font-weight:normal;color:#00ffff;letter-spacing:0px;">×1</div><div class="t" style="left:595px;top:607px;font-size:13px;font-weight:normal;color:#000;letter-spacing:0px;">M</div><div class="a" style="left:613px;top:600px;width:308px;height:24px;background:#fff;border-top:1px solid #a0a0a0;border-left:1px solid #a0a0a0;border-right:1px solid #fff;border-bottom:1px solid #fff;box-shadow:inset 1px 1px 0 #696969,inset -1px -1px 0 #e3e3e3"></div><div class="a" style="left:901px;top:602px;width:18px;height:22px;background:#f0f0f0;border-top:1px solid #e3e3e3;border-left:1px solid #e3e3e3;border-right:1px solid #696969;border-bottom:1px solid #696969;box-shadow:inset 1px 1px 0 #fff,inset -1px -1px 0 #a0a0a0"></div><div class="a" style="left:906px;top:610px;width:0;height:0;border-left:4px solid transparent;border-right:5px solid transparent;border-top:5px solid #000"></div><div class="t" style="left:617px;top:607px;font-size:13px;font-weight:normal;color:#000;letter-spacing:0px;">Amplitude Spectrum</div><div class="t" style="left:928px;top:607px;font-size:13px;font-weight:normal;color:#000;letter-spacing:0px;">B</div><div class="a" style="left:942px;top:600px;width:154px;height:24px;background:#000;border-top:1px solid #a0a0a0;border-left:1px solid #a0a0a0;border-right:1px solid #fff;border-bottom:1px solid #fff;box-shadow:inset 1px 1px 0 #696969,inset -1px -1px 0 #e3e3e3"></div><div class="a" style="left:1076px;top:602px;width:18px;height:22px;background:#f0f0f0;border-top:1px solid #e3e3e3;border-left:1px solid #e3e3e3;border-right:1px solid #696969;border-bottom:1px solid #696969;box-shadow:inset 1px 1px 0 #fff,inset -1px -1px 0 #a0a0a0"></div><div class="a" style="left:1081px;top:610px;width:0;height:0;border-left:4px solid transparent;border-right:5px solid transparent;border-top:5px solid #000"></div><div class="t" style="left:946px;top:607px;font-size:13px;font-weight:normal;color:#ffff00;letter-spacing:0px;">&lt;80dB&gt;</div><div class="a" style="left:1097px;top:600px;width:111px;height:24px;background:#000;border-top:1px solid #a0a0a0;border-left:1px solid #a0a0a0;border-right:1px solid #fff;border-bottom:1px solid #fff;box-shadow:inset 1px 1px 0 #696969,inset -1px -1px 0 #e3e3e3"></div><div class="a" style="left:1188px;top:602px;width:18px;height:22px;background:#f0f0f0;border-top:1px solid #e3e3e3;border-left:1px solid #e3e3e3;border-right:1px solid #696969;border-bottom:1px solid #696969;box-shadow:inset 1px 1px 0 #fff,inset -1px -1px 0 #a0a0a0"></div><div class="a" style="left:1193px;top:610px;width:0;height:0;border-left:4px solid transparent;border-right:5px solid transparent;border-top:5px solid #000"></div><div class="t" style="left:1101px;top:607px;font-size:13px;font-weight:normal;color:#ffff00;letter-spacing:0px;">×1</div><div class="t" style="left:1222px;top:607px;font-size:13px;font-weight:normal;color:#000;letter-spacing:0px;">FFT</div><div class="a" style="left:1254px;top:600px;width:158px;height:24px;background:#fff;border-top:1px solid #a0a0a0;border-left:1px solid #a0a0a0;border-right:1px solid #fff;border-bottom:1px solid #fff;box-shadow:inset 1px 1px 0 #696969,inset -1px -1px 0 #e3e3e3"></div><div class="a" style="left:1392px;top:602px;width:18px;height:22px;background:#f0f0f0;border-top:1px solid #e3e3e3;border-left:1px solid #e3e3e3;border-right:1px solid #696969;border-bottom:1px solid #696969;box-shadow:inset 1px 1px 0 #fff,inset -1px -1px 0 #a0a0a0"></div><div class="a" style="left:1397px;top:610px;width:0;height:0;border-left:4px solid transparent;border-right:5px solid transparent;border-top:5px solid #000"></div><div class="t" style="left:1258px;top:607px;font-size:13px;font-weight:normal;color:#000;letter-spacing:0px;">131072</div><div class="t" style="left:1434px;top:607px;font-size:13px;font-weight:normal;color:#000;letter-spacing:0px;">WND</div><div class="a" style="left:1486px;top:600px;width:90px;height:24px;background:#fff;border-top:1px solid #a0a0a0;border-left:1px solid #a0a0a0;border-right:1px solid #fff;border-bottom:1px solid #fff;box-shadow:inset 1px 1px 0 #696969,inset -1px -1px 0 #e3e3e3"></div><div class="t" style="left:1490px;top:607px;font-size:13px;font-weight:normal;color:#000;letter-spacing:0px;">Rectangle</div></body></html>
